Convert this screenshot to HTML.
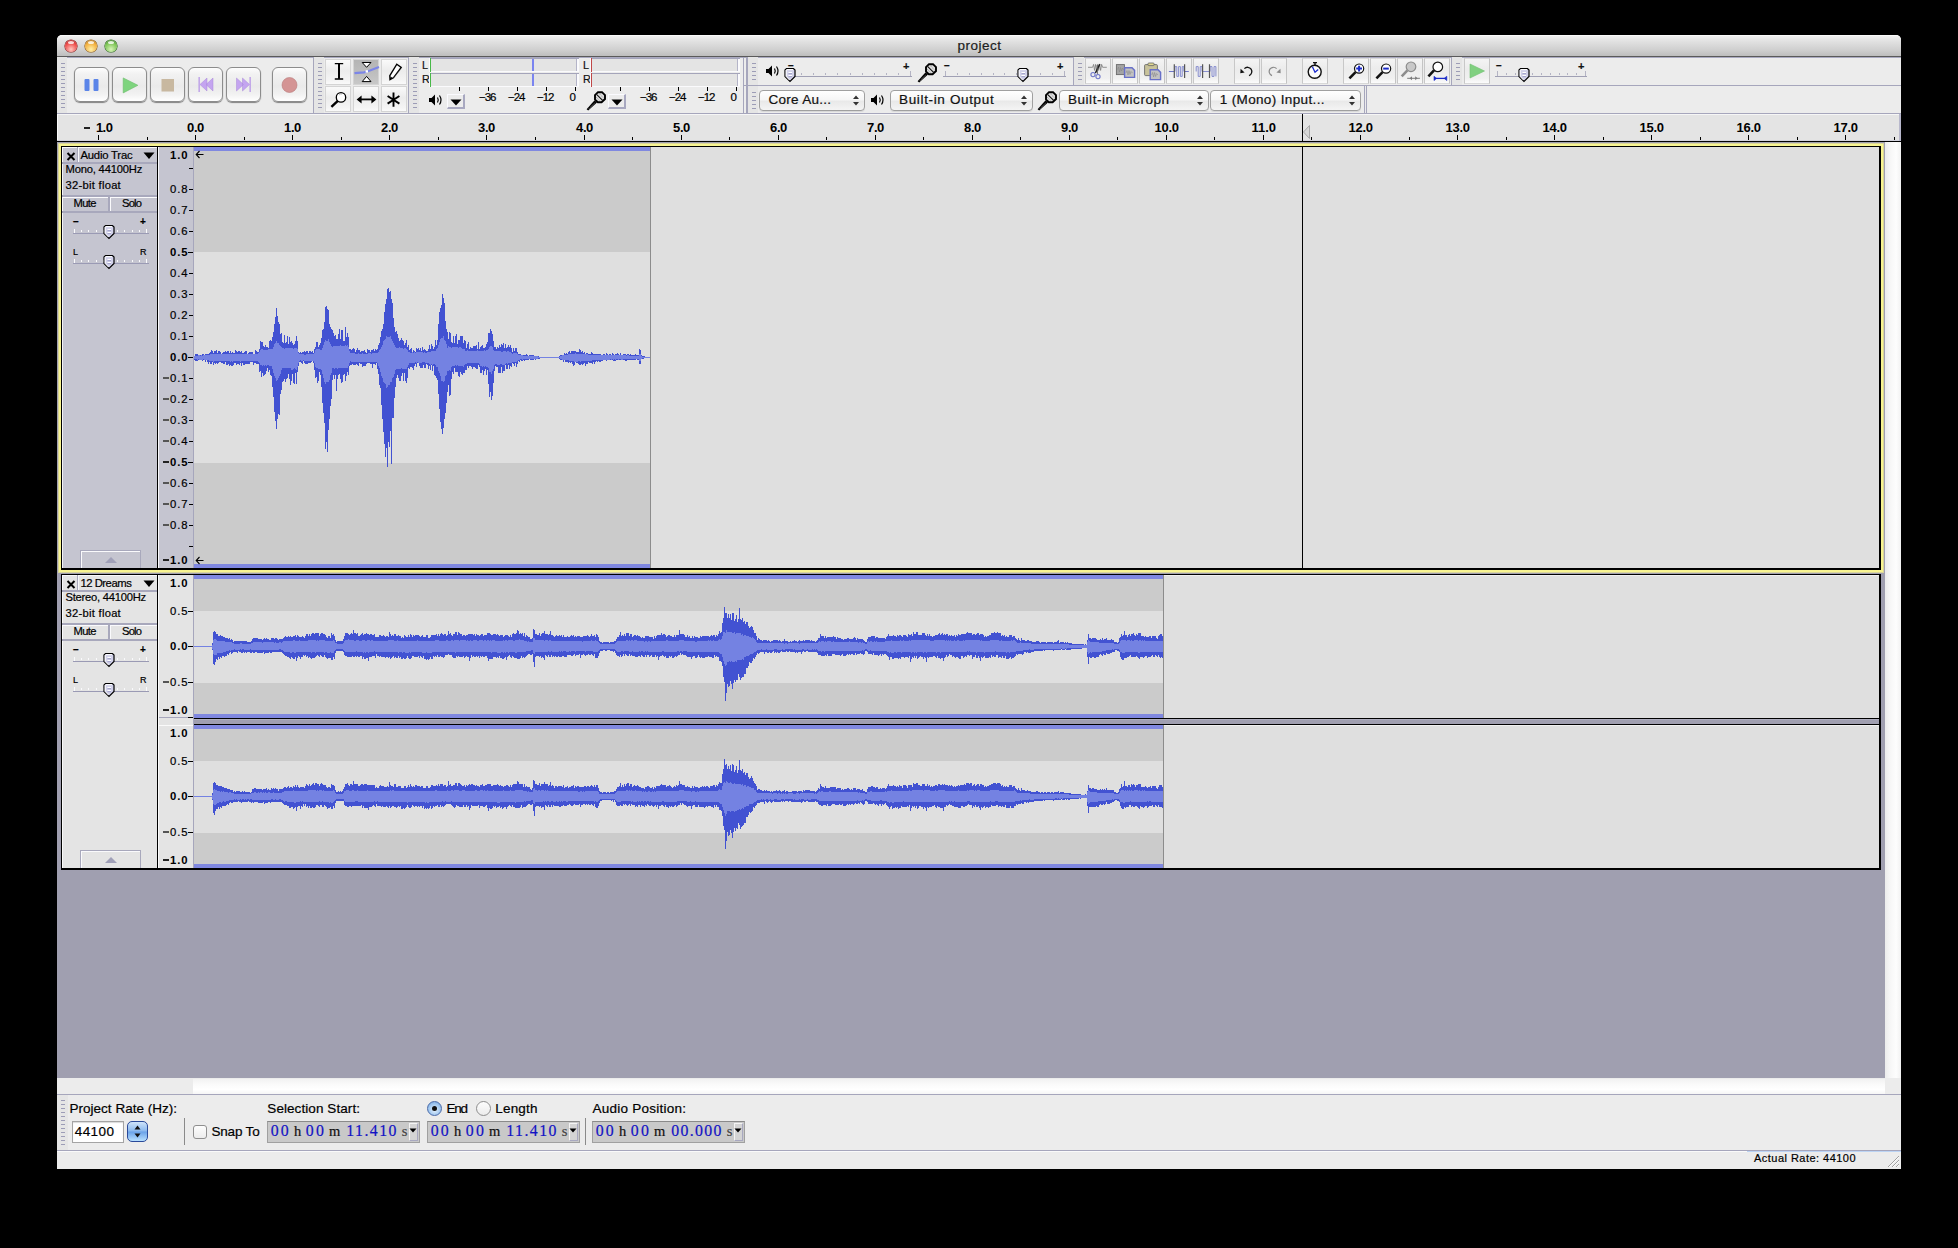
<!DOCTYPE html>
<html><head><meta charset="utf-8"><style>
*{margin:0;padding:0;box-sizing:border-box}
html,body{width:1958px;height:1248px;background:#000;overflow:hidden;font-family:"Liberation Sans",sans-serif;color:#000}
div{position:absolute}
.t{white-space:nowrap;line-height:1;-webkit-text-stroke:0.2px currentColor}
svg{position:absolute;overflow:visible}

</style></head><body>
<div style="left:57px;top:35px;width:1844px;height:1134px;background:#ececec;border-radius:5px 5px 0 0;overflow:hidden"></div>
<div style="left:57px;top:35px;width:1844px;height:21px;background:linear-gradient(#f0f0f0,#e2e2e2 25%,#cfcfcf 70%,#bdbdbd);border-radius:5px 5px 0 0;border-top:1px solid #fafafa"></div>
<div style="left:57px;top:56px;width:1844px;height:1px;background:#5a5a5a"></div>
<div style="left:57px;top:57px;width:1844px;height:1px;background:#a9a9c0"></div>
<div style="left:64.8px;top:40px;width:12px;height:12px;border-radius:50%;background:radial-gradient(circle at 50% 78%,#ffc8c0 0,#ee4a48 60%,#902020 100%);box-shadow:0 0 0 0.6px #902020"></div>
<div style="left:67.8px;top:41px;width:6px;height:3px;border-radius:50%;background:rgba(255,255,255,.8)"></div>
<div style="left:84.9px;top:40px;width:12px;height:12px;border-radius:50%;background:radial-gradient(circle at 50% 78%,#fff0a8 0,#f2ae3c 60%,#905a10 100%);box-shadow:0 0 0 0.6px #905a10"></div>
<div style="left:87.9px;top:41px;width:6px;height:3px;border-radius:50%;background:rgba(255,255,255,.8)"></div>
<div style="left:104.9px;top:40px;width:12px;height:12px;border-radius:50%;background:radial-gradient(circle at 50% 78%,#d8f4b8 0,#7cc454 60%,#2a6a1c 100%);box-shadow:0 0 0 0.6px #2a6a1c"></div>
<div style="left:107.9px;top:41px;width:6px;height:3px;border-radius:50%;background:rgba(255,255,255,.8)"></div>
<div class="t" style="left:957.60px;top:39.07px;font-size:13.5px;letter-spacing:0.497px;color:#202020;">project</div>
<div style="left:57px;top:58px;width:1844px;height:55px;background:#ececec"></div>
<div style="left:57px;top:113px;width:1844px;height:1px;background:#a6a6bc"></div>
<div style="left:744px;top:85px;width:1157px;height:1px;background:#a6a6bc"></div>
<div style="left:313px;top:57px;width:1px;height:56px;background:#a6a6bc"></div>
<div style="left:408px;top:57px;width:1px;height:56px;background:#a6a6bc"></div>
<div style="left:743px;top:57px;width:1px;height:56px;background:#a6a6bc"></div>
<div style="left:746px;top:57px;width:2px;height:56px;background:#a6a6bc"></div>
<div style="left:1073px;top:57px;width:1px;height:28px;background:#a6a6bc"></div>
<div style="left:1451px;top:57px;width:1px;height:28px;background:#a6a6bc"></div>
<div style="left:1364px;top:86px;width:1px;height:27px;background:#a6a6bc"></div>
<div style="left:1366px;top:86px;width:1px;height:27px;background:#a6a6bc"></div>
<div style="left:57px;top:57px;width:10px;height:56px;background:#e5e5e5"></div>
<div style="left:61px;top:63px;width:4px;height:1px;background:#9c9cb6"></div>
<div style="left:61px;top:67px;width:4px;height:1px;background:#9c9cb6"></div>
<div style="left:61px;top:71px;width:4px;height:1px;background:#9c9cb6"></div>
<div style="left:61px;top:75px;width:4px;height:1px;background:#9c9cb6"></div>
<div style="left:61px;top:79px;width:4px;height:1px;background:#9c9cb6"></div>
<div style="left:61px;top:83px;width:4px;height:1px;background:#9c9cb6"></div>
<div style="left:61px;top:87px;width:4px;height:1px;background:#9c9cb6"></div>
<div style="left:61px;top:91px;width:4px;height:1px;background:#9c9cb6"></div>
<div style="left:61px;top:95px;width:4px;height:1px;background:#9c9cb6"></div>
<div style="left:61px;top:99px;width:4px;height:1px;background:#9c9cb6"></div>
<div style="left:61px;top:103px;width:4px;height:1px;background:#9c9cb6"></div>
<div style="left:61px;top:107px;width:4px;height:1px;background:#9c9cb6"></div>
<div style="left:314px;top:57px;width:10px;height:56px;background:#e5e5e5"></div>
<div style="left:318px;top:63px;width:4px;height:1px;background:#9c9cb6"></div>
<div style="left:318px;top:67px;width:4px;height:1px;background:#9c9cb6"></div>
<div style="left:318px;top:71px;width:4px;height:1px;background:#9c9cb6"></div>
<div style="left:318px;top:75px;width:4px;height:1px;background:#9c9cb6"></div>
<div style="left:318px;top:79px;width:4px;height:1px;background:#9c9cb6"></div>
<div style="left:318px;top:83px;width:4px;height:1px;background:#9c9cb6"></div>
<div style="left:318px;top:87px;width:4px;height:1px;background:#9c9cb6"></div>
<div style="left:318px;top:91px;width:4px;height:1px;background:#9c9cb6"></div>
<div style="left:318px;top:95px;width:4px;height:1px;background:#9c9cb6"></div>
<div style="left:318px;top:99px;width:4px;height:1px;background:#9c9cb6"></div>
<div style="left:318px;top:103px;width:4px;height:1px;background:#9c9cb6"></div>
<div style="left:318px;top:107px;width:4px;height:1px;background:#9c9cb6"></div>
<div style="left:409px;top:57px;width:10px;height:56px;background:#e5e5e5"></div>
<div style="left:413px;top:63px;width:4px;height:1px;background:#9c9cb6"></div>
<div style="left:413px;top:67px;width:4px;height:1px;background:#9c9cb6"></div>
<div style="left:413px;top:71px;width:4px;height:1px;background:#9c9cb6"></div>
<div style="left:413px;top:75px;width:4px;height:1px;background:#9c9cb6"></div>
<div style="left:413px;top:79px;width:4px;height:1px;background:#9c9cb6"></div>
<div style="left:413px;top:83px;width:4px;height:1px;background:#9c9cb6"></div>
<div style="left:413px;top:87px;width:4px;height:1px;background:#9c9cb6"></div>
<div style="left:413px;top:91px;width:4px;height:1px;background:#9c9cb6"></div>
<div style="left:413px;top:95px;width:4px;height:1px;background:#9c9cb6"></div>
<div style="left:413px;top:99px;width:4px;height:1px;background:#9c9cb6"></div>
<div style="left:413px;top:103px;width:4px;height:1px;background:#9c9cb6"></div>
<div style="left:413px;top:107px;width:4px;height:1px;background:#9c9cb6"></div>
<div style="left:748px;top:57px;width:10px;height:28px;background:#e5e5e5"></div>
<div style="left:752px;top:63px;width:4px;height:1px;background:#9c9cb6"></div>
<div style="left:752px;top:67px;width:4px;height:1px;background:#9c9cb6"></div>
<div style="left:752px;top:71px;width:4px;height:1px;background:#9c9cb6"></div>
<div style="left:752px;top:75px;width:4px;height:1px;background:#9c9cb6"></div>
<div style="left:752px;top:79px;width:4px;height:1px;background:#9c9cb6"></div>
<div style="left:748px;top:86px;width:10px;height:27px;background:#e5e5e5"></div>
<div style="left:752px;top:92px;width:4px;height:1px;background:#9c9cb6"></div>
<div style="left:752px;top:96px;width:4px;height:1px;background:#9c9cb6"></div>
<div style="left:752px;top:100px;width:4px;height:1px;background:#9c9cb6"></div>
<div style="left:752px;top:104px;width:4px;height:1px;background:#9c9cb6"></div>
<div style="left:752px;top:108px;width:4px;height:1px;background:#9c9cb6"></div>
<div style="left:1074px;top:57px;width:10px;height:28px;background:#e5e5e5"></div>
<div style="left:1078px;top:63px;width:4px;height:1px;background:#9c9cb6"></div>
<div style="left:1078px;top:67px;width:4px;height:1px;background:#9c9cb6"></div>
<div style="left:1078px;top:71px;width:4px;height:1px;background:#9c9cb6"></div>
<div style="left:1078px;top:75px;width:4px;height:1px;background:#9c9cb6"></div>
<div style="left:1078px;top:79px;width:4px;height:1px;background:#9c9cb6"></div>
<div style="left:1452px;top:57px;width:10px;height:28px;background:#e5e5e5"></div>
<div style="left:1456px;top:63px;width:4px;height:1px;background:#9c9cb6"></div>
<div style="left:1456px;top:67px;width:4px;height:1px;background:#9c9cb6"></div>
<div style="left:1456px;top:71px;width:4px;height:1px;background:#9c9cb6"></div>
<div style="left:1456px;top:75px;width:4px;height:1px;background:#9c9cb6"></div>
<div style="left:1456px;top:79px;width:4px;height:1px;background:#9c9cb6"></div>
<div style="left:74px;top:67px;width:35px;height:35px;border:1px solid #8c8c8c;border-radius:6px;background:linear-gradient(#fdfdfd,#f2f2f2 18%,#eaeaea 55%,#f2f2f2 80%,#ffffff);box-shadow:0 1px 1px rgba(0,0,0,.45)"><svg width="35" height="35" style="left:-1px;top:-1px"><rect x="10.5" y="12" width="5" height="12" rx="1" fill="#5a84e8"/><rect x="19.5" y="12" width="5" height="12" rx="1" fill="#5a84e8"/></svg></div>
<div style="left:112px;top:67px;width:35px;height:35px;border:1px solid #8c8c8c;border-radius:6px;background:linear-gradient(#fdfdfd,#f2f2f2 18%,#eaeaea 55%,#f2f2f2 80%,#ffffff);box-shadow:0 1px 1px rgba(0,0,0,.45)"><svg width="35" height="35" style="left:-2px;top:-2px"><path d="M12.2 11.9 L26.9 19.3 L12.2 26.9 Z" fill="#7ed47e" stroke="#6cbc6c" stroke-width="0.6"/></svg></div>
<div style="left:150px;top:67px;width:35px;height:35px;border:1px solid #8c8c8c;border-radius:6px;background:linear-gradient(#fdfdfd,#f2f2f2 18%,#eaeaea 55%,#f2f2f2 80%,#ffffff);box-shadow:0 1px 1px rgba(0,0,0,.45)"><svg width="35" height="35" style="left:-1px;top:-1px"><rect x="11.5" y="12" width="12.5" height="12.5" fill="#c8b8a0"/></svg></div>
<div style="left:188px;top:67px;width:35px;height:35px;border:1px solid #8c8c8c;border-radius:6px;background:linear-gradient(#fdfdfd,#f2f2f2 18%,#eaeaea 55%,#f2f2f2 80%,#ffffff);box-shadow:0 1px 1px rgba(0,0,0,.45)"><svg width="35" height="35" style="left:-1px;top:-1px"><rect x="10.5" y="10" width="1.3" height="15" fill="#b898e8"/><path d="M12 17.5 L19 11 L19 24 Z M18 17.5 L25 11 L25 24 Z" fill="#c4a4f0" stroke="#a888d8" stroke-width="0.5"/></svg></div>
<div style="left:226px;top:67px;width:35px;height:35px;border:1px solid #8c8c8c;border-radius:6px;background:linear-gradient(#fdfdfd,#f2f2f2 18%,#eaeaea 55%,#f2f2f2 80%,#ffffff);box-shadow:0 1px 1px rgba(0,0,0,.45)"><svg width="35" height="35" style="left:-1px;top:-1px"><path d="M10.5 11 L17.5 17.5 L10.5 24 Z M16.5 11 L23.5 17.5 L16.5 24 Z" fill="#c4a4f0" stroke="#a888d8" stroke-width="0.5"/><rect x="23.5" y="10" width="1.3" height="15" fill="#b898e8"/></svg></div>
<div style="left:272px;top:67px;width:35px;height:35px;border:1px solid #8c8c8c;border-radius:6px;background:linear-gradient(#fdfdfd,#f2f2f2 18%,#eaeaea 55%,#f2f2f2 80%,#ffffff);box-shadow:0 1px 1px rgba(0,0,0,.45)"><svg width="35" height="35" style="left:-1px;top:-1px"><circle cx="17.5" cy="18" r="7.5" fill="#d49494" stroke="#b87878" stroke-width="0.6"/></svg></div>
<div style="left:325px;top:59px;width:26px;height:26px;background:linear-gradient(#fafafa,#ececec 45%,#f4f4f4 85%,#fafafa);border:1px solid #d4d4d4"><svg width="26" height="26" style="left:-2px;top:-2px"><path d="M10.8 5.6 H19.2 M15 5.6 V21 M10.8 21 H19.2" stroke="#000" stroke-width="1.3" fill="none"/><path d="M15 6 V20.5" stroke="#000" stroke-width="2"/></svg></div>
<div style="left:353px;top:59px;width:26px;height:26px;background:linear-gradient(#b4b4b4,#bdbdbd 50%,#c8c8c8);border:1px solid #d4d4d4"><svg width="26" height="26" style="left:-2px;top:-2px"><path d="M10.2 4.5 H19 L14.6 9.3 Z M10.2 23.6 H19 L14.6 18.4 Z" fill="#fff" stroke="#000" stroke-width="1"/><path d="M2.5 15.2 L12 14.3 L18 12.5 L27 9" stroke="#7c86e8" stroke-width="2.2" fill="none"/><rect x="13.6" y="12.2" width="2.4" height="2.4" fill="#fff"/></svg></div>
<div style="left:381px;top:59px;width:26px;height:26px;background:linear-gradient(#fafafa,#ececec 45%,#f4f4f4 85%,#fafafa);border:1px solid #d4d4d4"><svg width="26" height="26" style="left:-2px;top:-2px"><path d="M16.8 6.2 L21.2 9.4 L13.4 19.8 L10 21.6 L9.8 17.6 Z" fill="#fff" stroke="#000" stroke-width="1.4"/><path d="M10 21.6 L10.6 18.6 L12.6 20 Z" fill="#000"/><path d="M14 19.6 L21.4 10.6" stroke="#777" stroke-width="0.7" stroke-dasharray="0.8 0.8"/></svg></div>
<div style="left:325px;top:86px;width:26px;height:26px;background:linear-gradient(#fafafa,#ececec 45%,#f4f4f4 85%,#fafafa);border:1px solid #d4d4d4"><svg width="26" height="26" style="left:-2px;top:-2px"><circle cx="17" cy="12.4" r="4.7" fill="#fff" stroke="#000" stroke-width="1.3"/><path d="M13.8 15.8 L7.4 21.8" stroke="#000" stroke-width="2.4"/><path d="M15 10 A3 3 0 0 1 18 9" stroke="#999" stroke-width="0.6" fill="none"/></svg></div>
<div style="left:353px;top:86px;width:26px;height:26px;background:linear-gradient(#fafafa,#ececec 45%,#f4f4f4 85%,#fafafa);border:1px solid #d4d4d4"><svg width="26" height="26" style="left:-2px;top:-2px"><path d="M7 14.4 H22" stroke="#000" stroke-width="1.8"/><path d="M4.6 14.4 L9.6 10.4 V18.4 Z M24.4 14.4 L19.4 10.4 V18.4 Z" fill="#000"/></svg></div>
<div style="left:381px;top:86px;width:26px;height:26px;background:linear-gradient(#fafafa,#ececec 45%,#f4f4f4 85%,#fafafa);border:1px solid #d4d4d4"><svg width="26" height="26" style="left:-2px;top:-2px"><path d="M13.5 7.5 V21.8 M7.6 11 L19.4 18.6 M19.4 11 L7.6 18.6" stroke="#000" stroke-width="1.9"/></svg></div>
<div class="t" style="left:422.00px;top:59.76px;font-size:10.8px;color:#111;">L</div>
<div class="t" style="left:422.00px;top:73.76px;font-size:10.8px;color:#111;">R</div>
<div style="left:429px;top:58px;width:150px;height:14px;background:#fafafc"></div>
<div style="left:431px;top:58px;width:148px;height:1px;background:#a4a4ba"></div>
<div style="left:431px;top:59px;width:145px;height:12px;background:#e4e4e4"></div>
<div style="left:576px;top:59px;width:1px;height:12px;background:#b4b4c8"></div>
<div style="left:430px;top:58px;width:1px;height:14px;background:#48b848"></div>
<div style="left:429px;top:73px;width:150px;height:14px;background:#fafafc"></div>
<div style="left:431px;top:73px;width:148px;height:1px;background:#a4a4ba"></div>
<div style="left:431px;top:74px;width:145px;height:12px;background:#e4e4e4"></div>
<div style="left:576px;top:74px;width:1px;height:12px;background:#b4b4c8"></div>
<div style="left:430px;top:73px;width:1px;height:14px;background:#48b848"></div>
<div class="t" style="left:583.00px;top:59.76px;font-size:10.8px;color:#111;">L</div>
<div class="t" style="left:583.00px;top:73.76px;font-size:10.8px;color:#111;">R</div>
<div style="left:590px;top:58px;width:150px;height:14px;background:#fafafc"></div>
<div style="left:592px;top:58px;width:148px;height:1px;background:#a4a4ba"></div>
<div style="left:592px;top:59px;width:145px;height:12px;background:#e4e4e4"></div>
<div style="left:737px;top:59px;width:1px;height:12px;background:#b4b4c8"></div>
<div style="left:591px;top:58px;width:1px;height:14px;background:#c04848"></div>
<div style="left:590px;top:73px;width:150px;height:14px;background:#fafafc"></div>
<div style="left:592px;top:73px;width:148px;height:1px;background:#a4a4ba"></div>
<div style="left:592px;top:74px;width:145px;height:12px;background:#e4e4e4"></div>
<div style="left:737px;top:74px;width:1px;height:12px;background:#b4b4c8"></div>
<div style="left:591px;top:73px;width:1px;height:14px;background:#c04848"></div>
<div style="left:532px;top:59px;width:2px;height:12px;background:#7a84f0"></div>
<div style="left:532px;top:74px;width:2px;height:12px;background:#7a84f0"></div>
<div style="left:459px;top:87px;width:1px;height:4px;background:#000"></div>
<div style="left:488px;top:87px;width:1px;height:4px;background:#000"></div>
<div style="left:517px;top:87px;width:1px;height:4px;background:#000"></div>
<div style="left:546px;top:87px;width:1px;height:4px;background:#000"></div>
<div style="left:575px;top:87px;width:1px;height:4px;background:#000"></div>
<div style="left:620px;top:87px;width:1px;height:4px;background:#000"></div>
<div style="left:649px;top:87px;width:1px;height:4px;background:#000"></div>
<div style="left:678px;top:87px;width:1px;height:4px;background:#000"></div>
<div style="left:707px;top:87px;width:1px;height:4px;background:#000"></div>
<div style="left:736px;top:87px;width:1px;height:4px;background:#000"></div>
<div class="t" style="left:479.00px;top:91.77px;font-size:11.5px;letter-spacing:-1.003px;">&minus;36</div>
<div class="t" style="left:508.00px;top:91.77px;font-size:11.5px;letter-spacing:-1.003px;">&minus;24</div>
<div class="t" style="left:537.00px;top:91.77px;font-size:11.5px;letter-spacing:-1.003px;">&minus;12</div>
<div class="t" style="left:569.50px;top:91.77px;font-size:11.5px;">0</div>
<div class="t" style="left:640.00px;top:91.77px;font-size:11.5px;letter-spacing:-1.003px;">&minus;36</div>
<div class="t" style="left:669.00px;top:91.77px;font-size:11.5px;letter-spacing:-1.003px;">&minus;24</div>
<div class="t" style="left:698.00px;top:91.77px;font-size:11.5px;letter-spacing:-1.003px;">&minus;12</div>
<div class="t" style="left:730.50px;top:91.77px;font-size:11.5px;">0</div>
<div style="left:428px;top:93px;width:16px;height:14px"><svg width="16" height="14"><path d="M1 5 H3.5 L7 1.5 V12.5 L3.5 9 H1 Z" fill="#000"/><path d="M9.5 4.5 Q11 7 9.5 9.5 M11.5 2.5 Q14.5 7 11.5 11.5" stroke="#000" stroke-width="1.2" fill="none"/></svg></div>
<div style="left:447px;top:94px;width:18px;height:15px;border-left:1px solid #fbfbff;border-top:1px solid #fbfbff;border-right:2px solid #a8a8c0;border-bottom:2px solid #a8a8c0;background:#ececec"><svg width="14" height="8" style="left:2px;top:4px"><path d="M0.5 0.5 H11.5 L6 6.5 Z" fill="#000"/></svg></div>
<div style="left:585.5px;top:91px;width:20px;height:20px"><svg width="20" height="20"><path d="M8.6 9.2 L11 11.4 L2.2 19.6 L0.6 18.2 Z" fill="#000"/><path d="M3 17.6 L9 11.8" stroke="#fff" stroke-width="0.6" stroke-dasharray="0.8 0.8"/><path d="M12 1.2 H16 L19 4.2 V8 L15.6 11.2 H11.8 L9 8.4 V4.2 Z" fill="#dedede" stroke="#000" stroke-width="1.9"/><path d="M10.8 3.6 L16.6 9.4" stroke="#111" stroke-width="1.1"/><path d="M13.6 3 L17.6 7 M10.2 6.2 L13.4 9.4" stroke="#8a8a8a" stroke-width="0.8" stroke-dasharray="1 0.8"/></svg></div>
<div style="left:608px;top:94px;width:18px;height:15px;border-left:1px solid #fbfbff;border-top:1px solid #fbfbff;border-right:2px solid #a8a8c0;border-bottom:2px solid #a8a8c0;background:#ececec"><svg width="14" height="8" style="left:2px;top:4px"><path d="M0.5 0.5 H11.5 L6 6.5 Z" fill="#000"/></svg></div>
<div style="left:765px;top:64px;width:16px;height:14px"><svg width="16" height="14"><path d="M1 5 H3.5 L7 1.5 V12.5 L3.5 9 H1 Z" fill="#000"/><path d="M9.5 4.5 Q11 7 9.5 9.5 M11.5 2.5 Q14.5 7 11.5 11.5" stroke="#000" stroke-width="1.2" fill="none"/></svg></div>
<div style="left:917px;top:62.5px;width:20px;height:20px"><svg width="20" height="20"><path d="M8.6 9.2 L11 11.4 L2.2 19.6 L0.6 18.2 Z" fill="#000"/><path d="M3 17.6 L9 11.8" stroke="#fff" stroke-width="0.6" stroke-dasharray="0.8 0.8"/><path d="M12 1.2 H16 L19 4.2 V8 L15.6 11.2 H11.8 L9 8.4 V4.2 Z" fill="#dedede" stroke="#000" stroke-width="1.9"/><path d="M10.8 3.6 L16.6 9.4" stroke="#111" stroke-width="1.1"/><path d="M13.6 3 L17.6 7 M10.2 6.2 L13.4 9.4" stroke="#8a8a8a" stroke-width="0.8" stroke-dasharray="1 0.8"/></svg></div>
<div style="left:787px;top:76px;width:125px;height:1px;background:#a0a0b4"></div>
<div style="left:789px;top:71px;width:1px;height:5px;background:#b4b4c4"></div>
<div style="left:801px;top:73px;width:1px;height:2px;background:#b4b4c4"></div>
<div style="left:813px;top:73px;width:1px;height:2px;background:#b4b4c4"></div>
<div style="left:825px;top:73px;width:1px;height:2px;background:#b4b4c4"></div>
<div style="left:837px;top:73px;width:1px;height:2px;background:#b4b4c4"></div>
<div style="left:850px;top:73px;width:1px;height:2px;background:#b4b4c4"></div>
<div style="left:862px;top:73px;width:1px;height:2px;background:#b4b4c4"></div>
<div style="left:874px;top:73px;width:1px;height:2px;background:#b4b4c4"></div>
<div style="left:886px;top:73px;width:1px;height:2px;background:#b4b4c4"></div>
<div style="left:898px;top:73px;width:1px;height:2px;background:#b4b4c4"></div>
<div style="left:910px;top:71px;width:1px;height:5px;background:#b4b4c4"></div>
<div class="t" style="left:788px;top:60.5px;font-size:10px;font-weight:bold;color:#111">&ndash;</div>
<div class="t" style="left:903px;top:60.5px;font-size:11px;font-weight:bold;color:#111">+</div>
<svg width="14" height="17" style="left:783px;top:67px"><path d="M3.5 1.5 H10.5 L12 3 V9.5 L7 14.5 L2 9.5 V3 Z" fill="#d2d2ea" stroke="#000" stroke-width="1.2"/><path d="M3.2 3 V9.5 L6.5 13 M3.5 2.6 H10" stroke="#fff" stroke-width="1" fill="none"/><path d="M5.5 5.5 H9 M5.5 8.5 H9" stroke="#fff" stroke-width="1"/><path d="M5.5 6.7 H9 M5.5 9.7 H9" stroke="#9898c4" stroke-width="0.9"/></svg>
<div style="left:943px;top:76px;width:123px;height:1px;background:#a0a0b4"></div>
<div style="left:945px;top:71px;width:1px;height:5px;background:#b4b4c4"></div>
<div style="left:957px;top:73px;width:1px;height:2px;background:#b4b4c4"></div>
<div style="left:969px;top:73px;width:1px;height:2px;background:#b4b4c4"></div>
<div style="left:981px;top:73px;width:1px;height:2px;background:#b4b4c4"></div>
<div style="left:993px;top:73px;width:1px;height:2px;background:#b4b4c4"></div>
<div style="left:1004px;top:73px;width:1px;height:2px;background:#b4b4c4"></div>
<div style="left:1016px;top:73px;width:1px;height:2px;background:#b4b4c4"></div>
<div style="left:1028px;top:73px;width:1px;height:2px;background:#b4b4c4"></div>
<div style="left:1040px;top:73px;width:1px;height:2px;background:#b4b4c4"></div>
<div style="left:1052px;top:73px;width:1px;height:2px;background:#b4b4c4"></div>
<div style="left:1064px;top:71px;width:1px;height:5px;background:#b4b4c4"></div>
<div class="t" style="left:944px;top:60.5px;font-size:10px;font-weight:bold;color:#111">&ndash;</div>
<div class="t" style="left:1057px;top:60.5px;font-size:11px;font-weight:bold;color:#111">+</div>
<svg width="14" height="17" style="left:1016px;top:67px"><path d="M3.5 1.5 H10.5 L12 3 V9.5 L7 14.5 L2 9.5 V3 Z" fill="#d2d2ea" stroke="#000" stroke-width="1.2"/><path d="M3.2 3 V9.5 L6.5 13 M3.5 2.6 H10" stroke="#fff" stroke-width="1" fill="none"/><path d="M5.5 5.5 H9 M5.5 8.5 H9" stroke="#fff" stroke-width="1"/><path d="M5.5 6.7 H9 M5.5 9.7 H9" stroke="#9898c4" stroke-width="0.9"/></svg>
<div style="left:1085px;top:58px;width:26px;height:26px;background:linear-gradient(#f4f4f4,#ececec 40%,#f0f0f0 80%,#fcfcfc);border:1px solid #d8d8d8;border-left-color:#c8c8c8;border-right-color:#c4c4c4"><svg width="26" height="26" style="left:-1px;top:-1px"><path d="M3 9.3 H7.6 L8.6 6.4 L9.6 12.4 L10.6 6.4 L11.6 12.4 L12.6 6.4 L13.6 12.4 L14.6 6.4 L15.6 12.4 L16.6 6.4 L17.6 9.3 H21.8" stroke="#7a7a7a" stroke-width="0.8" fill="none"/><path d="M14.8 6.2 L10.4 15" stroke="#222" stroke-width="1.6"/><path d="M12.2 7 L12.6 16.2" stroke="#555" stroke-width="0.8"/><circle cx="8" cy="16.6" r="2.1" fill="none" stroke="#6e76c8" stroke-width="1.1"/><circle cx="13" cy="18.6" r="2.1" fill="none" stroke="#6e76c8" stroke-width="1.1"/></svg></div>
<div style="left:1112px;top:58px;width:26px;height:26px;background:linear-gradient(#f4f4f4,#ececec 40%,#f0f0f0 80%,#fcfcfc);border:1px solid #d8d8d8;border-left-color:#c8c8c8;border-right-color:#c4c4c4"><svg width="26" height="26" style="left:-1px;top:-1px"><rect x="4.4" y="6.6" width="8" height="10" fill="#a4a4a4" stroke="#6a6a6a" stroke-width="0.9"/><path d="M5.5 11.5 L6.5 9 L7.5 14 L8.5 9.5 L9.5 13 L10.5 10 L11.5 12" stroke="#888" stroke-width="0.6" fill="none"/><path d="M12.6 9.8 H20 L22.6 12.4 V19.4 H12.6 Z" fill="#c2c2c2" stroke="#6870c8" stroke-width="1.4"/><path d="M14 15 L15 12.5 L16 17 L17 12.5 L18 16.5 L19 13.5 L20.5 15" stroke="#8a8a8a" stroke-width="0.6" fill="none"/></svg></div>
<div style="left:1139px;top:58px;width:26px;height:26px;background:linear-gradient(#f4f4f4,#ececec 40%,#f0f0f0 80%,#fcfcfc);border:1px solid #d8d8d8;border-left-color:#c8c8c8;border-right-color:#c4c4c4"><svg width="26" height="26" style="left:-1px;top:-1px"><rect x="5.6" y="6.6" width="12.8" height="11" rx="1" fill="#c8c29a" stroke="#6a6a6a" stroke-width="0.9"/><rect x="9" y="5" width="6" height="2.6" rx="0.8" fill="#e0d890" stroke="#666" stroke-width="0.8"/><path d="M11.2 11.8 H19 L21.6 14.4 V21.6 H11.2 Z" fill="#c2c2c2" stroke="#6870c8" stroke-width="1.4"/><path d="M12.6 17 L13.6 14.5 L14.6 19 L15.6 14.5 L16.6 18.5 L17.6 15.5 L19 17" stroke="#8a8a8a" stroke-width="0.6" fill="none"/></svg></div>
<div style="left:1166px;top:58px;width:26px;height:26px;background:linear-gradient(#f4f4f4,#ececec 40%,#f0f0f0 80%,#fcfcfc);border:1px solid #d8d8d8;border-left-color:#c8c8c8;border-right-color:#c4c4c4"><svg width="26" height="26" style="left:-1px;top:-1px"><path d="M2.9 13.5 H8.3 M18.6 13.5 H22.8" stroke="#6e76c8" stroke-width="1.1"/><path d="M9 13.5 V8.6 H10.8 V18.4 H12.6 V8.6 H14.4 V18.4 H16.2 V8.6 H17.8 V13.5" stroke="#6e76c8" stroke-width="0.8" fill="none"/><path d="M8.3 6.2 V20 M18.6 6.2 V20" stroke="#555" stroke-width="1.2"/></svg></div>
<div style="left:1193px;top:58px;width:26px;height:26px;background:linear-gradient(#f4f4f4,#ececec 40%,#f0f0f0 80%,#fcfcfc);border:1px solid #d8d8d8;border-left-color:#c8c8c8;border-right-color:#c4c4c4"><svg width="26" height="26" style="left:-1px;top:-1px"><path d="M3.2 13.5 V8.6 H5.2 V18.4 H7.2 V8.6 H9 V13.5 M9.6 13.5 H16.5 M17.1 13.5 V8.6 H19 V18.4 H21 V8.6 H22.9 V18.4" stroke="#6e76c8" stroke-width="0.8" fill="none"/><path d="M9.6 6.2 V20 M16.5 6.2 V20" stroke="#555" stroke-width="1.2"/></svg></div>
<div style="left:1234px;top:58px;width:26px;height:26px;background:linear-gradient(#f4f4f4,#ececec 40%,#f0f0f0 80%,#fcfcfc);border:1px solid #d8d8d8;border-left-color:#c8c8c8;border-right-color:#c4c4c4"><svg width="26" height="26" style="left:-1px;top:-1px"><path d="M15 17.6 A4.3 4.3 0 1 0 10.4 10.6" stroke="#111" stroke-width="1.3" fill="none"/><path d="M6.3 15.2 L6.6 10.8 L10.6 14.4 Z" fill="#111"/></svg></div>
<div style="left:1261px;top:58px;width:26px;height:26px;background:linear-gradient(#f4f4f4,#ececec 40%,#f0f0f0 80%,#fcfcfc);border:1px solid #d8d8d8;border-left-color:#c8c8c8;border-right-color:#c4c4c4"><svg width="26" height="26" style="left:-1px;top:-1px"><path d="M11 17.6 A4.3 4.3 0 1 1 15.6 10.6" stroke="#8a8a8a" stroke-width="1.2" fill="none"/><path d="M19.7 15.2 L19.4 10.8 L15.4 14.4 Z" fill="#8a8a8a"/></svg></div>
<div style="left:1302px;top:58px;width:26px;height:26px;background:linear-gradient(#f4f4f4,#ececec 40%,#f0f0f0 80%,#fcfcfc);border:1px solid #d8d8d8;border-left-color:#c8c8c8;border-right-color:#c4c4c4"><svg width="26" height="26" style="left:-1px;top:-1px"><circle cx="13.4" cy="14.6" r="6.6" fill="#c8c8c8" opacity="0.5"/><circle cx="12.7" cy="13.8" r="6.5" fill="#fbfbfb" stroke="#111" stroke-width="1.4"/><path d="M11 4.6 H15 M13 4.6 V7.2" stroke="#111" stroke-width="1.4"/><path d="M10.4 8.8 L13 14.2 L16.2 11.6" stroke="#1a2ad0" stroke-width="1.3" fill="none"/></svg></div>
<div style="left:1343px;top:58px;width:26px;height:26px;background:linear-gradient(#f4f4f4,#ececec 40%,#f0f0f0 80%,#fcfcfc);border:1px solid #d8d8d8;border-left-color:#c8c8c8;border-right-color:#c4c4c4"><svg width="26" height="26" style="left:-1px;top:-1px"><path d="M12.6 14.2 L6.4 20.4" stroke="#111" stroke-width="2.6"/><circle cx="16.1" cy="10.6" r="4.6" fill="#fff" stroke="#111" stroke-width="1.2"/><path d="M13.2 10.6 H19 M16.1 7.8 V13.5" stroke="#1a2ac8" stroke-width="2"/></svg></div>
<div style="left:1370px;top:58px;width:26px;height:26px;background:linear-gradient(#f4f4f4,#ececec 40%,#f0f0f0 80%,#fcfcfc);border:1px solid #d8d8d8;border-left-color:#c8c8c8;border-right-color:#c4c4c4"><svg width="26" height="26" style="left:-1px;top:-1px"><path d="M12.6 14.2 L6.4 20.4" stroke="#111" stroke-width="2.6"/><circle cx="16.1" cy="10.6" r="4.6" fill="#fff" stroke="#111" stroke-width="1.2"/><path d="M13.2 10.6 H18.8" stroke="#1a2ac8" stroke-width="2"/></svg></div>
<div style="left:1397px;top:58px;width:26px;height:26px;background:linear-gradient(#f4f4f4,#ececec 40%,#f0f0f0 80%,#fcfcfc);border:1px solid #d8d8d8;border-left-color:#c8c8c8;border-right-color:#c4c4c4"><svg width="26" height="26" style="left:-1px;top:-1px"><path d="M10.4 12.4 L4.7 18.4" stroke="#8c8c8c" stroke-width="2.6"/><circle cx="14" cy="8.8" r="4.8" fill="#c8c8c8" stroke="#8c8c8c" stroke-width="1.2"/><path d="M10.2 20.3 H22.9" stroke="#7a7a7a" stroke-width="1"/><path d="M12.6 20.3 L15 18.3 V22.3 Z M20.6 20.3 L18.2 18.3 V22.3 Z" fill="#7a7a7a"/></svg></div>
<div style="left:1424px;top:58px;width:26px;height:26px;background:linear-gradient(#f4f4f4,#ececec 40%,#f0f0f0 80%,#fcfcfc);border:1px solid #d8d8d8;border-left-color:#c8c8c8;border-right-color:#c4c4c4"><svg width="26" height="26" style="left:-1px;top:-1px"><path d="M10 12.4 L4.4 18.3" stroke="#111" stroke-width="2.6"/><circle cx="13.8" cy="8.9" r="4.8" fill="#fff" stroke="#111" stroke-width="1.2"/><path d="M10.6 20.4 H22.2" stroke="#1a2ac8" stroke-width="1.3"/><path d="M10 18.2 V22.6 L12.6 20.4 Z M22.8 18.2 V22.6 L20.2 20.4 Z" fill="#1a2ac8" stroke="#1a2ac8" stroke-width="0.6"/></svg></div>
<div style="left:1464px;top:58px;width:26px;height:26px;background:linear-gradient(#f4f4f4,#ececec 40%,#f0f0f0 80%,#fcfcfc);border:1px solid #d8d8d8;border-left-color:#c8c8c8;border-right-color:#c4c4c4"><svg width="26" height="26" style="left:-1px;top:-1px"><path d="M6 6 L20.5 13 L6 20 Z" fill="#80d080" stroke="#70c070" stroke-width="0.6"/></svg></div>
<div style="left:1495px;top:76px;width:92px;height:1px;background:#a0a0b4"></div>
<div style="left:1497px;top:71px;width:1px;height:5px;background:#b4b4c4"></div>
<div style="left:1506px;top:73px;width:1px;height:2px;background:#b4b4c4"></div>
<div style="left:1515px;top:73px;width:1px;height:2px;background:#b4b4c4"></div>
<div style="left:1523px;top:73px;width:1px;height:2px;background:#b4b4c4"></div>
<div style="left:1532px;top:73px;width:1px;height:2px;background:#b4b4c4"></div>
<div style="left:1541px;top:73px;width:1px;height:2px;background:#b4b4c4"></div>
<div style="left:1550px;top:73px;width:1px;height:2px;background:#b4b4c4"></div>
<div style="left:1559px;top:73px;width:1px;height:2px;background:#b4b4c4"></div>
<div style="left:1567px;top:73px;width:1px;height:2px;background:#b4b4c4"></div>
<div style="left:1576px;top:73px;width:1px;height:2px;background:#b4b4c4"></div>
<div style="left:1585px;top:71px;width:1px;height:5px;background:#b4b4c4"></div>
<div class="t" style="left:1496px;top:60.5px;font-size:10px;font-weight:bold;color:#111">&ndash;</div>
<div class="t" style="left:1578px;top:60.5px;font-size:11px;font-weight:bold;color:#111">+</div>
<svg width="14" height="17" style="left:1517px;top:67px"><path d="M3.5 1.5 H10.5 L12 3 V9.5 L7 14.5 L2 9.5 V3 Z" fill="#d2d2ea" stroke="#000" stroke-width="1.2"/><path d="M3.2 3 V9.5 L6.5 13 M3.5 2.6 H10" stroke="#fff" stroke-width="1" fill="none"/><path d="M5.5 5.5 H9 M5.5 8.5 H9" stroke="#fff" stroke-width="1"/><path d="M5.5 6.7 H9 M5.5 9.7 H9" stroke="#9898c4" stroke-width="0.9"/></svg>
<div style="left:759px;top:90px;width:106px;height:21px;border:1px solid #a0a0a0;border-radius:4px;background:linear-gradient(#ffffff,#f6f6f6 45%,#e9e9e9 55%,#f4f4f4);box-shadow:0 1px 0 rgba(0,0,0,.08)"><svg width="8" height="13" style="left:92px;top:3px"><path d="M1 5 L4 1.5 L7 5 Z M1 8 L4 11.5 L7 8 Z" fill="#333"/></svg></div>
<div style="left:870px;top:93px;width:16px;height:14px"><svg width="16" height="14"><path d="M1 5 H3.5 L7 1.5 V12.5 L3.5 9 H1 Z" fill="#000"/><path d="M9.5 4.5 Q11 7 9.5 9.5 M11.5 2.5 Q14.5 7 11.5 11.5" stroke="#000" stroke-width="1.2" fill="none"/></svg></div>
<div style="left:890px;top:90px;width:143px;height:21px;border:1px solid #a0a0a0;border-radius:4px;background:linear-gradient(#ffffff,#f6f6f6 45%,#e9e9e9 55%,#f4f4f4);box-shadow:0 1px 0 rgba(0,0,0,.08)"><svg width="8" height="13" style="left:129px;top:3px"><path d="M1 5 L4 1.5 L7 5 Z M1 8 L4 11.5 L7 8 Z" fill="#333"/></svg></div>
<div style="left:1037px;top:90.5px;width:20px;height:20px"><svg width="20" height="20"><path d="M8.6 9.2 L11 11.4 L2.2 19.6 L0.6 18.2 Z" fill="#000"/><path d="M3 17.6 L9 11.8" stroke="#fff" stroke-width="0.6" stroke-dasharray="0.8 0.8"/><path d="M12 1.2 H16 L19 4.2 V8 L15.6 11.2 H11.8 L9 8.4 V4.2 Z" fill="#dedede" stroke="#000" stroke-width="1.9"/><path d="M10.8 3.6 L16.6 9.4" stroke="#111" stroke-width="1.1"/><path d="M13.6 3 L17.6 7 M10.2 6.2 L13.4 9.4" stroke="#8a8a8a" stroke-width="0.8" stroke-dasharray="1 0.8"/></svg></div>
<div style="left:1059px;top:90px;width:150px;height:21px;border:1px solid #a0a0a0;border-radius:4px;background:linear-gradient(#ffffff,#f6f6f6 45%,#e9e9e9 55%,#f4f4f4);box-shadow:0 1px 0 rgba(0,0,0,.08)"><svg width="8" height="13" style="left:136px;top:3px"><path d="M1 5 L4 1.5 L7 5 Z M1 8 L4 11.5 L7 8 Z" fill="#333"/></svg></div>
<div style="left:1210px;top:90px;width:151px;height:21px;border:1px solid #a0a0a0;border-radius:4px;background:linear-gradient(#ffffff,#f6f6f6 45%,#e9e9e9 55%,#f4f4f4);box-shadow:0 1px 0 rgba(0,0,0,.08)"><svg width="8" height="13" style="left:137px;top:3px"><path d="M1 5 L4 1.5 L7 5 Z M1 8 L4 11.5 L7 8 Z" fill="#333"/></svg></div>
<div class="t" style="left:768.50px;top:92.77px;font-size:13.5px;letter-spacing:0.275px;color:#111;">Core Au...</div>
<div class="t" style="left:899.00px;top:92.77px;font-size:13.5px;letter-spacing:0.654px;color:#111;">Built-in Output</div>
<div class="t" style="left:1068.00px;top:92.77px;font-size:13.5px;letter-spacing:0.531px;color:#111;">Built-in Microph</div>
<div class="t" style="left:1219.70px;top:92.77px;font-size:13.5px;letter-spacing:0.360px;color:#111;">1 (Mono) Input...</div>
<div style="left:57px;top:114px;width:1844px;height:27px;background:#e4e4e4;border-top:1px solid #f6f6f6"></div>
<div style="left:57px;top:114px;width:1px;height:27px;background:#fafafa"></div>
<div style="left:1899px;top:114px;width:2px;height:27px;background:#b8b8cc"></div>
<div style="left:57px;top:141px;width:1844px;height:1px;background:#000"></div>
<div style="left:57px;top:140px;width:1842px;height:1px;background:#d2d2dc"></div>
<div style="left:98px;top:135px;width:1px;height:5px;background:#000"></div>
<div style="left:147px;top:137px;width:1px;height:3px;background:#000"></div>
<div style="left:195px;top:135px;width:1px;height:5px;background:#000"></div>
<div style="left:244px;top:137px;width:1px;height:3px;background:#000"></div>
<div style="left:292px;top:135px;width:1px;height:5px;background:#000"></div>
<div style="left:341px;top:137px;width:1px;height:3px;background:#000"></div>
<div style="left:389px;top:135px;width:1px;height:5px;background:#000"></div>
<div style="left:438px;top:137px;width:1px;height:3px;background:#000"></div>
<div style="left:486px;top:135px;width:1px;height:5px;background:#000"></div>
<div style="left:535px;top:137px;width:1px;height:3px;background:#000"></div>
<div style="left:584px;top:135px;width:1px;height:5px;background:#000"></div>
<div style="left:632px;top:137px;width:1px;height:3px;background:#000"></div>
<div style="left:681px;top:135px;width:1px;height:5px;background:#000"></div>
<div style="left:729px;top:137px;width:1px;height:3px;background:#000"></div>
<div style="left:778px;top:135px;width:1px;height:5px;background:#000"></div>
<div style="left:826px;top:137px;width:1px;height:3px;background:#000"></div>
<div style="left:875px;top:135px;width:1px;height:5px;background:#000"></div>
<div style="left:923px;top:137px;width:1px;height:3px;background:#000"></div>
<div style="left:972px;top:135px;width:1px;height:5px;background:#000"></div>
<div style="left:1020px;top:137px;width:1px;height:3px;background:#000"></div>
<div style="left:1069px;top:135px;width:1px;height:5px;background:#000"></div>
<div style="left:1117px;top:137px;width:1px;height:3px;background:#000"></div>
<div style="left:1166px;top:135px;width:1px;height:5px;background:#000"></div>
<div style="left:1214px;top:137px;width:1px;height:3px;background:#000"></div>
<div style="left:1263px;top:135px;width:1px;height:5px;background:#000"></div>
<div style="left:1311px;top:137px;width:1px;height:3px;background:#000"></div>
<div style="left:1360px;top:135px;width:1px;height:5px;background:#000"></div>
<div style="left:1409px;top:137px;width:1px;height:3px;background:#000"></div>
<div style="left:1457px;top:135px;width:1px;height:5px;background:#000"></div>
<div style="left:1506px;top:137px;width:1px;height:3px;background:#000"></div>
<div style="left:1554px;top:135px;width:1px;height:5px;background:#000"></div>
<div style="left:1603px;top:137px;width:1px;height:3px;background:#000"></div>
<div style="left:1651px;top:135px;width:1px;height:5px;background:#000"></div>
<div style="left:1700px;top:137px;width:1px;height:3px;background:#000"></div>
<div style="left:1748px;top:135px;width:1px;height:5px;background:#000"></div>
<div style="left:1797px;top:137px;width:1px;height:3px;background:#000"></div>
<div style="left:1845px;top:135px;width:1px;height:5px;background:#000"></div>
<div style="left:1894px;top:137px;width:1px;height:3px;background:#000"></div>
<div style="left:84px;top:127px;width:6px;height:2px;background:#222"></div>
<div class="t" style="left:95.90px;top:120.90px;font-size:13px;font-weight:bold;-webkit-text-stroke:0;letter-spacing:-0.536px;">1.0</div>
<div class="t" style="left:187.10px;top:120.90px;font-size:13px;font-weight:bold;-webkit-text-stroke:0;letter-spacing:-0.436px;">0.0</div>
<div class="t" style="left:284.10px;top:120.90px;font-size:13px;font-weight:bold;-webkit-text-stroke:0;letter-spacing:-0.436px;">1.0</div>
<div class="t" style="left:381.10px;top:120.90px;font-size:13px;font-weight:bold;-webkit-text-stroke:0;letter-spacing:-0.436px;">2.0</div>
<div class="t" style="left:478.10px;top:120.90px;font-size:13px;font-weight:bold;-webkit-text-stroke:0;letter-spacing:-0.436px;">3.0</div>
<div class="t" style="left:576.10px;top:120.90px;font-size:13px;font-weight:bold;-webkit-text-stroke:0;letter-spacing:-0.436px;">4.0</div>
<div class="t" style="left:673.10px;top:120.90px;font-size:13px;font-weight:bold;-webkit-text-stroke:0;letter-spacing:-0.436px;">5.0</div>
<div class="t" style="left:770.10px;top:120.90px;font-size:13px;font-weight:bold;-webkit-text-stroke:0;letter-spacing:-0.436px;">6.0</div>
<div class="t" style="left:867.10px;top:120.90px;font-size:13px;font-weight:bold;-webkit-text-stroke:0;letter-spacing:-0.436px;">7.0</div>
<div class="t" style="left:964.10px;top:120.90px;font-size:13px;font-weight:bold;-webkit-text-stroke:0;letter-spacing:-0.436px;">8.0</div>
<div class="t" style="left:1061.10px;top:120.90px;font-size:13px;font-weight:bold;-webkit-text-stroke:0;letter-spacing:-0.436px;">9.0</div>
<div class="t" style="left:1154.40px;top:120.90px;font-size:13px;font-weight:bold;-webkit-text-stroke:0;letter-spacing:-0.234px;">10.0</div>
<div class="t" style="left:1251.40px;top:120.90px;font-size:13px;font-weight:bold;-webkit-text-stroke:0;letter-spacing:0.005px;">11.0</div>
<div class="t" style="left:1348.40px;top:120.90px;font-size:13px;font-weight:bold;-webkit-text-stroke:0;letter-spacing:-0.234px;">12.0</div>
<div class="t" style="left:1445.40px;top:120.90px;font-size:13px;font-weight:bold;-webkit-text-stroke:0;letter-spacing:-0.234px;">13.0</div>
<div class="t" style="left:1542.40px;top:120.90px;font-size:13px;font-weight:bold;-webkit-text-stroke:0;letter-spacing:-0.234px;">14.0</div>
<div class="t" style="left:1639.40px;top:120.90px;font-size:13px;font-weight:bold;-webkit-text-stroke:0;letter-spacing:-0.234px;">15.0</div>
<div class="t" style="left:1736.40px;top:120.90px;font-size:13px;font-weight:bold;-webkit-text-stroke:0;letter-spacing:-0.234px;">16.0</div>
<div class="t" style="left:1833.40px;top:120.90px;font-size:13px;font-weight:bold;-webkit-text-stroke:0;letter-spacing:-0.234px;">17.0</div>
<div style="left:1302px;top:114px;width:1px;height:27px;background:#000"></div>
<svg width="10" height="16" style="left:1302px;top:124px"><path d="M7.5 1.5 V14.5 L1.5 8 Z" fill="#d8d8d8" stroke="#a8a8a8" stroke-width="1"/></svg>
<div style="left:57px;top:142px;width:1828px;height:936px;background:#a09fb0"></div>
<div style="left:1885px;top:142px;width:16px;height:936px;background:linear-gradient(90deg,#ececec,#f6f6f6 30%,#fdfdfd 70%,#f2f2f2)"></div>
<div style="left:57px;top:1078px;width:1844px;height:16px;background:#ececec"></div>
<div style="left:193px;top:1079px;width:1692px;height:15px;background:linear-gradient(#f2f2f2,#fbfbfb 40%,#ffffff 70%,#f6f6f6)"></div>
<div style="left:58px;top:143px;width:1826px;height:430px;background:#f8f490;box-shadow:inset 0 0 0 1px #d8d49c"></div>
<div style="left:61px;top:146px;width:1820px;height:424px;background:#000"></div>
<div style="left:62px;top:147px;width:95px;height:421px;background:#c5c5d0"></div>
<div style="left:62px;top:147px;width:1px;height:421px;background:#f4f4f8"></div>
<div style="left:157px;top:147px;width:1px;height:421px;background:#000"></div>
<div style="left:158px;top:147px;width:1px;height:421px;background:#f8f8fc"></div>
<div style="left:159px;top:147px;width:34px;height:421px;background:#c5c5d0"></div>
<div style="left:193px;top:147px;width:1px;height:421px;background:#a6a6bc"></div>
<div style="left:194px;top:147px;width:1685px;height:421px;background:#dfdfdf"></div>
<div style="left:62px;top:147px;width:15px;height:15px;background:#c5c5d0;border-top:1px solid #fafafc;border-left:1px solid #fafafc"><svg width="12" height="12" style="left:2px;top:2px"><path d="M2.5 3 L9.5 10 M9.5 3 L2.5 10" stroke="#000" stroke-width="2"/></svg></div>
<div style="left:77px;top:147px;width:1px;height:15px;background:#a8a8bc"></div>
<div style="left:78px;top:147px;width:79px;height:15px;background:#c5c5d0;border-top:1px solid #fafafc;border-left:1px solid #fafafc"><svg width="12" height="8" style="left:64px;top:4px"><path d="M0.5 0.5 H11.5 L6 7 Z" fill="#000"/></svg></div>
<div class="t" style="left:80.40px;top:149.63px;font-size:11.3px;letter-spacing:-0.191px;">Audio Trac</div>
<div style="left:62px;top:162px;width:95px;height:2px;background:#a8a8bc"></div>
<div class="t" style="left:65.50px;top:164.12px;font-size:11.2px;letter-spacing:-0.182px;">Mono, 44100Hz</div>
<div class="t" style="left:65.50px;top:180.42px;font-size:11.2px;letter-spacing:0.272px;">32-bit float</div>
<div style="left:62px;top:195px;width:95px;height:2px;background:#a8a8bc"></div>
<div style="left:62px;top:197px;width:46px;height:14px;background:#c5c5d0;border-left:1px solid #fafafc;border-top:1px solid #fafafc"></div>
<div class="t" style="left:73.60px;top:197.92px;font-size:11.2px;letter-spacing:-0.667px;">Mute</div>
<div style="left:108px;top:197px;width:2px;height:14px;background:#a8a8bc"></div>
<div style="left:110px;top:197px;width:47px;height:14px;background:#c5c5d0;border-left:1px solid #fafafc;border-top:1px solid #fafafc"></div>
<div class="t" style="left:122.00px;top:197.92px;font-size:11.2px;letter-spacing:-0.806px;">Solo</div>
<div style="left:62px;top:211px;width:95px;height:2px;background:#a8a8bc"></div>
<div style="left:73px;top:233px;width:76px;height:1px;background:#9a9ab4"></div>
<div style="left:74px;top:229px;width:1px;height:4px;background:#fafafc"></div>
<div style="left:81px;top:230px;width:1px;height:2px;background:#fafafc"></div>
<div style="left:88px;top:230px;width:1px;height:2px;background:#fafafc"></div>
<div style="left:96px;top:230px;width:1px;height:2px;background:#fafafc"></div>
<div style="left:103px;top:230px;width:1px;height:2px;background:#fafafc"></div>
<div style="left:110px;top:230px;width:1px;height:2px;background:#fafafc"></div>
<div style="left:117px;top:230px;width:1px;height:2px;background:#fafafc"></div>
<div style="left:124px;top:230px;width:1px;height:2px;background:#fafafc"></div>
<div style="left:132px;top:230px;width:1px;height:2px;background:#fafafc"></div>
<div style="left:139px;top:230px;width:1px;height:2px;background:#fafafc"></div>
<div style="left:146px;top:229px;width:1px;height:4px;background:#fafafc"></div>
<div class="t" style="left:73px;top:217px;font-size:10px;font-weight:bold">&ndash;</div>
<div class="t" style="left:140px;top:217px;font-size:10px;font-weight:bold">+</div>
<svg width="14" height="17" style="left:102px;top:224px"><path d="M3.5 1.5 H10.5 L12 3 V9.5 L7 14.5 L2 9.5 V3 Z" fill="#d2d2ea" stroke="#000" stroke-width="1.2"/><path d="M3.2 3 V9.5 L6.5 13 M3.5 2.6 H10" stroke="#fff" stroke-width="1" fill="none"/><path d="M5.5 5.5 H9 M5.5 8.5 H9" stroke="#fff" stroke-width="1"/><path d="M5.5 6.7 H9 M5.5 9.7 H9" stroke="#9898c4" stroke-width="0.9"/></svg>
<div style="left:73px;top:263px;width:76px;height:1px;background:#9a9ab4"></div>
<div style="left:74px;top:259px;width:1px;height:4px;background:#fafafc"></div>
<div style="left:81px;top:260px;width:1px;height:2px;background:#fafafc"></div>
<div style="left:88px;top:260px;width:1px;height:2px;background:#fafafc"></div>
<div style="left:96px;top:260px;width:1px;height:2px;background:#fafafc"></div>
<div style="left:103px;top:260px;width:1px;height:2px;background:#fafafc"></div>
<div style="left:110px;top:260px;width:1px;height:2px;background:#fafafc"></div>
<div style="left:117px;top:260px;width:1px;height:2px;background:#fafafc"></div>
<div style="left:124px;top:260px;width:1px;height:2px;background:#fafafc"></div>
<div style="left:132px;top:260px;width:1px;height:2px;background:#fafafc"></div>
<div style="left:139px;top:260px;width:1px;height:2px;background:#fafafc"></div>
<div style="left:146px;top:259px;width:1px;height:4px;background:#fafafc"></div>
<div class="t" style="left:73px;top:248px;font-size:9px">L</div>
<div class="t" style="left:140px;top:248px;font-size:9px">R</div>
<svg width="14" height="17" style="left:102px;top:254px"><path d="M3.5 1.5 H10.5 L12 3 V9.5 L7 14.5 L2 9.5 V3 Z" fill="#d2d2ea" stroke="#000" stroke-width="1.2"/><path d="M3.2 3 V9.5 L6.5 13 M3.5 2.6 H10" stroke="#fff" stroke-width="1" fill="none"/><path d="M5.5 5.5 H9 M5.5 8.5 H9" stroke="#fff" stroke-width="1"/><path d="M5.5 6.7 H9 M5.5 9.7 H9" stroke="#9898c4" stroke-width="0.9"/></svg>
<div style="left:80px;top:550px;width:61px;height:18px;border:1px solid #a8a8bc;border-bottom:none;box-shadow:inset 1px 1px 0 #fafafc;background:#c5c5d0"><svg width="14" height="8" style="left:23px;top:5px"><path d="M1 7 L7 1 L13 7 Z" fill="#a0a0b8"/></svg></div>
<div style="left:194px;top:147px;width:456px;height:421px;background:#cbcbcb"></div>
<div style="left:194px;top:252px;width:456px;height:211px;background:#dfdfdf"></div>
<div style="left:194px;top:147px;width:456px;height:4px;background:#8088e0"></div>
<div style="left:194px;top:564px;width:456px;height:4px;background:#8088e0"></div>
<div style="left:650px;top:147px;width:1px;height:421px;background:#8c8c8c"></div>
<div style="left:1302px;top:147px;width:1px;height:421px;background:#000"></div>
<div style="left:189px;top:546px;width:4px;height:1px;background:#000"></div>
<div style="left:189px;top:525px;width:4px;height:1px;background:#000"></div>
<div style="left:189px;top:504px;width:4px;height:1px;background:#000"></div>
<div style="left:189px;top:483px;width:4px;height:1px;background:#000"></div>
<div style="left:188px;top:462px;width:5px;height:1px;background:#000"></div>
<div style="left:189px;top:441px;width:4px;height:1px;background:#000"></div>
<div style="left:189px;top:420px;width:4px;height:1px;background:#000"></div>
<div style="left:189px;top:399px;width:4px;height:1px;background:#000"></div>
<div style="left:189px;top:378px;width:4px;height:1px;background:#000"></div>
<div style="left:188px;top:357px;width:5px;height:1px;background:#000"></div>
<div style="left:189px;top:336px;width:4px;height:1px;background:#000"></div>
<div style="left:189px;top:315px;width:4px;height:1px;background:#000"></div>
<div style="left:189px;top:294px;width:4px;height:1px;background:#000"></div>
<div style="left:189px;top:273px;width:4px;height:1px;background:#000"></div>
<div style="left:188px;top:252px;width:5px;height:1px;background:#000"></div>
<div style="left:189px;top:231px;width:4px;height:1px;background:#000"></div>
<div style="left:189px;top:210px;width:4px;height:1px;background:#000"></div>
<div style="left:189px;top:189px;width:4px;height:1px;background:#000"></div>
<div style="left:189px;top:168px;width:4px;height:1px;background:#000"></div>
<div style="left:189px;top:168px;width:4px;height:1px;background:#000"></div>
<div class="t" style="left:170.10px;top:149.63px;font-size:11.3px;font-weight:bold;-webkit-text-stroke:0;letter-spacing:0.846px;">1.0</div>
<div class="t" style="left:170.10px;top:183.63px;font-size:11.3px;letter-spacing:0.846px;">0.8</div>
<div class="t" style="left:170.10px;top:204.63px;font-size:11.3px;letter-spacing:0.846px;">0.7</div>
<div class="t" style="left:170.10px;top:225.63px;font-size:11.3px;letter-spacing:0.846px;">0.6</div>
<div class="t" style="left:170.10px;top:246.63px;font-size:11.3px;font-weight:bold;-webkit-text-stroke:0;letter-spacing:0.846px;">0.5</div>
<div class="t" style="left:170.10px;top:267.63px;font-size:11.3px;letter-spacing:0.846px;">0.4</div>
<div class="t" style="left:170.10px;top:288.63px;font-size:11.3px;letter-spacing:0.846px;">0.3</div>
<div class="t" style="left:170.10px;top:309.63px;font-size:11.3px;letter-spacing:0.846px;">0.2</div>
<div class="t" style="left:170.10px;top:330.63px;font-size:11.3px;letter-spacing:0.846px;">0.1</div>
<div class="t" style="left:170.10px;top:351.63px;font-size:11.3px;font-weight:bold;-webkit-text-stroke:0;letter-spacing:0.846px;">0.0</div>
<div class="t" style="left:170.10px;top:372.63px;font-size:11.3px;letter-spacing:0.846px;">0.1</div>
<div style="left:163px;top:377.0px;width:5.8px;height:1.8px;background:#555"></div>
<div class="t" style="left:170.10px;top:393.63px;font-size:11.3px;letter-spacing:0.846px;">0.2</div>
<div style="left:163px;top:398.0px;width:5.8px;height:1.8px;background:#555"></div>
<div class="t" style="left:170.10px;top:414.63px;font-size:11.3px;letter-spacing:0.846px;">0.3</div>
<div style="left:163px;top:419.0px;width:5.8px;height:1.8px;background:#555"></div>
<div class="t" style="left:170.10px;top:435.63px;font-size:11.3px;letter-spacing:0.846px;">0.4</div>
<div style="left:163px;top:440.0px;width:5.8px;height:1.8px;background:#555"></div>
<div class="t" style="left:170.10px;top:456.63px;font-size:11.3px;font-weight:bold;-webkit-text-stroke:0;letter-spacing:0.846px;">0.5</div>
<div style="left:163px;top:461.0px;width:5.8px;height:2.2px;background:#222"></div>
<div class="t" style="left:170.10px;top:477.63px;font-size:11.3px;letter-spacing:0.846px;">0.6</div>
<div style="left:163px;top:482.0px;width:5.8px;height:1.8px;background:#555"></div>
<div class="t" style="left:170.10px;top:498.63px;font-size:11.3px;letter-spacing:0.846px;">0.7</div>
<div style="left:163px;top:503.0px;width:5.8px;height:1.8px;background:#555"></div>
<div class="t" style="left:170.10px;top:519.63px;font-size:11.3px;letter-spacing:0.846px;">0.8</div>
<div style="left:163px;top:524.0px;width:5.8px;height:1.8px;background:#555"></div>
<div class="t" style="left:170.10px;top:554.63px;font-size:11.3px;font-weight:bold;-webkit-text-stroke:0;letter-spacing:0.846px;">1.0</div>
<div style="left:163px;top:559.0px;width:5.8px;height:2.2px;background:#222"></div>
<svg width="10" height="10" style="left:195px;top:149.5px"><path d="M1.2 4.5 H8.5 M4.5 1 L1.2 4.5 L4.5 8" stroke="#000" stroke-width="1.1" fill="none"/></svg>
<svg width="10" height="10" style="left:195px;top:555.5px"><path d="M1.2 4.5 H8.5 M4.5 1 L1.2 4.5 L4.5 8" stroke="#000" stroke-width="1.1" fill="none"/></svg>
<div style="left:61px;top:574px;width:1820px;height:296px;background:#000"></div>
<div style="left:62px;top:575px;width:95px;height:293px;background:#e4e4e4"></div>
<div style="left:62px;top:575px;width:1px;height:293px;background:#fafafa"></div>
<div style="left:157px;top:575px;width:1px;height:293px;background:#000"></div>
<div style="left:158px;top:575px;width:1px;height:293px;background:#fafafa"></div>
<div style="left:159px;top:575px;width:34px;height:293px;background:#e4e4e4"></div>
<div style="left:193px;top:575px;width:1px;height:293px;background:#a6a6bc"></div>
<div style="left:194px;top:575px;width:1685px;height:293px;background:#dfdfdf"></div>
<div style="left:62px;top:575px;width:15px;height:15px;background:#e4e4e4;border-top:1px solid #fafafc;border-left:1px solid #fafafc"><svg width="12" height="12" style="left:2px;top:2px"><path d="M2.5 3 L9.5 10 M9.5 3 L2.5 10" stroke="#000" stroke-width="2"/></svg></div>
<div style="left:77px;top:575px;width:1px;height:15px;background:#a8a8bc"></div>
<div style="left:78px;top:575px;width:79px;height:15px;background:#e4e4e4;border-top:1px solid #fafafc;border-left:1px solid #fafafc"><svg width="12" height="8" style="left:64px;top:4px"><path d="M0.5 0.5 H11.5 L6 7 Z" fill="#000"/></svg></div>
<div class="t" style="left:80.40px;top:577.63px;font-size:11.3px;letter-spacing:-0.483px;">12 Dreams</div>
<div style="left:62px;top:590px;width:95px;height:2px;background:#a8a8bc"></div>
<div class="t" style="left:65.50px;top:592.12px;font-size:11.2px;letter-spacing:-0.240px;">Stereo, 44100Hz</div>
<div class="t" style="left:65.50px;top:608.42px;font-size:11.2px;letter-spacing:0.272px;">32-bit float</div>
<div style="left:62px;top:623px;width:95px;height:2px;background:#a8a8bc"></div>
<div style="left:62px;top:625px;width:46px;height:14px;background:#e4e4e4;border-left:1px solid #fafafc;border-top:1px solid #fafafc"></div>
<div class="t" style="left:73.60px;top:625.92px;font-size:11.2px;letter-spacing:-0.667px;">Mute</div>
<div style="left:108px;top:625px;width:2px;height:14px;background:#a8a8bc"></div>
<div style="left:110px;top:625px;width:47px;height:14px;background:#e4e4e4;border-left:1px solid #fafafc;border-top:1px solid #fafafc"></div>
<div class="t" style="left:122.00px;top:625.92px;font-size:11.2px;letter-spacing:-0.806px;">Solo</div>
<div style="left:62px;top:639px;width:95px;height:2px;background:#a8a8bc"></div>
<div style="left:73px;top:661px;width:76px;height:1px;background:#9a9ab4"></div>
<div style="left:74px;top:657px;width:1px;height:4px;background:#fafafc"></div>
<div style="left:81px;top:658px;width:1px;height:2px;background:#fafafc"></div>
<div style="left:88px;top:658px;width:1px;height:2px;background:#fafafc"></div>
<div style="left:96px;top:658px;width:1px;height:2px;background:#fafafc"></div>
<div style="left:103px;top:658px;width:1px;height:2px;background:#fafafc"></div>
<div style="left:110px;top:658px;width:1px;height:2px;background:#fafafc"></div>
<div style="left:117px;top:658px;width:1px;height:2px;background:#fafafc"></div>
<div style="left:124px;top:658px;width:1px;height:2px;background:#fafafc"></div>
<div style="left:132px;top:658px;width:1px;height:2px;background:#fafafc"></div>
<div style="left:139px;top:658px;width:1px;height:2px;background:#fafafc"></div>
<div style="left:146px;top:657px;width:1px;height:4px;background:#fafafc"></div>
<div class="t" style="left:73px;top:645px;font-size:10px;font-weight:bold">&ndash;</div>
<div class="t" style="left:140px;top:645px;font-size:10px;font-weight:bold">+</div>
<svg width="14" height="17" style="left:102px;top:652px"><path d="M3.5 1.5 H10.5 L12 3 V9.5 L7 14.5 L2 9.5 V3 Z" fill="#d2d2ea" stroke="#000" stroke-width="1.2"/><path d="M3.2 3 V9.5 L6.5 13 M3.5 2.6 H10" stroke="#fff" stroke-width="1" fill="none"/><path d="M5.5 5.5 H9 M5.5 8.5 H9" stroke="#fff" stroke-width="1"/><path d="M5.5 6.7 H9 M5.5 9.7 H9" stroke="#9898c4" stroke-width="0.9"/></svg>
<div style="left:73px;top:691px;width:76px;height:1px;background:#9a9ab4"></div>
<div style="left:74px;top:687px;width:1px;height:4px;background:#fafafc"></div>
<div style="left:81px;top:688px;width:1px;height:2px;background:#fafafc"></div>
<div style="left:88px;top:688px;width:1px;height:2px;background:#fafafc"></div>
<div style="left:96px;top:688px;width:1px;height:2px;background:#fafafc"></div>
<div style="left:103px;top:688px;width:1px;height:2px;background:#fafafc"></div>
<div style="left:110px;top:688px;width:1px;height:2px;background:#fafafc"></div>
<div style="left:117px;top:688px;width:1px;height:2px;background:#fafafc"></div>
<div style="left:124px;top:688px;width:1px;height:2px;background:#fafafc"></div>
<div style="left:132px;top:688px;width:1px;height:2px;background:#fafafc"></div>
<div style="left:139px;top:688px;width:1px;height:2px;background:#fafafc"></div>
<div style="left:146px;top:687px;width:1px;height:4px;background:#fafafc"></div>
<div class="t" style="left:73px;top:676px;font-size:9px">L</div>
<div class="t" style="left:140px;top:676px;font-size:9px">R</div>
<svg width="14" height="17" style="left:102px;top:682px"><path d="M3.5 1.5 H10.5 L12 3 V9.5 L7 14.5 L2 9.5 V3 Z" fill="#d2d2ea" stroke="#000" stroke-width="1.2"/><path d="M3.2 3 V9.5 L6.5 13 M3.5 2.6 H10" stroke="#fff" stroke-width="1" fill="none"/><path d="M5.5 5.5 H9 M5.5 8.5 H9" stroke="#fff" stroke-width="1"/><path d="M5.5 6.7 H9 M5.5 9.7 H9" stroke="#9898c4" stroke-width="0.9"/></svg>
<div style="left:80px;top:850px;width:61px;height:18px;border:1px solid #a8a8bc;border-bottom:none;box-shadow:inset 1px 1px 0 #fafafc;background:#e4e4e4"><svg width="14" height="8" style="left:23px;top:5px"><path d="M1 7 L7 1 L13 7 Z" fill="#a0a0b8"/></svg></div>
<div style="left:194px;top:718px;width:1685px;height:7px;background:#a09fb0;border-top:1px solid #000;border-bottom:1px solid #000"></div>
<div style="left:194px;top:719px;width:1685px;height:1px;background:#b0afc0"></div>
<div style="left:159px;top:717px;width:29px;height:1px;background:#a6a6bc"></div>
<div style="left:188px;top:717px;width:5px;height:1px;background:#000"></div>
<div style="left:159px;top:725px;width:34px;height:1px;background:#fafafa"></div>
<div style="left:194px;top:575px;width:969px;height:143px;background:#cbcbcb"></div>
<div style="left:194px;top:611px;width:969px;height:72px;background:#dfdfdf"></div>
<div style="left:194px;top:575px;width:969px;height:4px;background:#8088e0"></div>
<div style="left:194px;top:714px;width:969px;height:4px;background:#8088e0"></div>
<div style="left:1163px;top:575px;width:1px;height:143px;background:#8c8c8c"></div>
<div style="left:1164px;top:575px;width:715px;height:1px;background:#f0f0f0"></div>
<div style="left:188px;top:611px;width:5px;height:1px;background:#000"></div>
<div style="left:188px;top:646px;width:5px;height:1px;background:#000"></div>
<div style="left:188px;top:682px;width:5px;height:1px;background:#000"></div>
<div class="t" style="left:170.10px;top:577.63px;font-size:11.3px;font-weight:bold;-webkit-text-stroke:0;letter-spacing:0.846px;">1.0</div>
<div class="t" style="left:170.10px;top:605.63px;font-size:11.3px;letter-spacing:0.846px;">0.5</div>
<div class="t" style="left:170.10px;top:640.63px;font-size:11.3px;font-weight:bold;-webkit-text-stroke:0;letter-spacing:0.846px;">0.0</div>
<div class="t" style="left:170.10px;top:676.63px;font-size:11.3px;letter-spacing:0.846px;">0.5</div>
<div style="left:163px;top:681.0px;width:5.8px;height:1.8px;background:#555"></div>
<div class="t" style="left:170.10px;top:704.63px;font-size:11.3px;font-weight:bold;-webkit-text-stroke:0;letter-spacing:0.846px;">1.0</div>
<div style="left:163px;top:709.0px;width:5.8px;height:2.2px;background:#222"></div>
<div style="left:194px;top:725px;width:969px;height:143px;background:#cbcbcb"></div>
<div style="left:194px;top:761px;width:969px;height:72px;background:#dfdfdf"></div>
<div style="left:194px;top:725px;width:969px;height:4px;background:#8088e0"></div>
<div style="left:194px;top:864px;width:969px;height:4px;background:#8088e0"></div>
<div style="left:1163px;top:725px;width:1px;height:143px;background:#8c8c8c"></div>
<div style="left:1164px;top:725px;width:715px;height:1px;background:#f0f0f0"></div>
<div style="left:188px;top:761px;width:5px;height:1px;background:#000"></div>
<div style="left:188px;top:796px;width:5px;height:1px;background:#000"></div>
<div style="left:188px;top:832px;width:5px;height:1px;background:#000"></div>
<div class="t" style="left:170.10px;top:727.63px;font-size:11.3px;font-weight:bold;-webkit-text-stroke:0;letter-spacing:0.846px;">1.0</div>
<div class="t" style="left:170.10px;top:755.63px;font-size:11.3px;letter-spacing:0.846px;">0.5</div>
<div class="t" style="left:170.10px;top:790.63px;font-size:11.3px;font-weight:bold;-webkit-text-stroke:0;letter-spacing:0.846px;">0.0</div>
<div class="t" style="left:170.10px;top:826.63px;font-size:11.3px;letter-spacing:0.846px;">0.5</div>
<div style="left:163px;top:831.0px;width:5.8px;height:1.8px;background:#555"></div>
<div class="t" style="left:170.10px;top:854.63px;font-size:11.3px;font-weight:bold;-webkit-text-stroke:0;letter-spacing:0.846px;">1.0</div>
<div style="left:163px;top:859.0px;width:5.8px;height:2.2px;background:#222"></div>
<div style="left:0;top:0;width:0;height:0"><svg width="1958" height="1248" style="left:0;top:0" shape-rendering="crispEdges"><path d="M194 356V356H195V354H196V354H197V354H198V355H199V355H200V355H201V355H202V354H203V354H204V355H205V354H206V354H207V354H208V354H209V353H210V352H211V350H212V351H213V353H214V351H215V351H216V350H217V353H218V351H219V351H220V352H221V354H222V353H223V352H224V352H225V351H226V352H227V351H228V351H229V353H230V351H231V353H232V352H233V353H234V353H235V350H236V351H237V352H238V351H239V351H240V352H241V351H242V353H243V353H244V352H245V351H246V351H247V354H248V353H249V352H250V352H251V352H252V352H253V354H254V354H255V350H256V351H257V352H258V352H259V349H260V341H261V342H262V342H263V346H264V347H265V345H266V347H267V347H268V348H269V341H270V340H271V341H272V337H273V332H274V324H275V317H276V308H277V316H278V322H279V324H280V334H281V333H282V342H283V343H284V335H285V343H286V342H287V336H288V344H289V337H290V342H291V341H292V343H293V345H294V344H295V341H296V336H297V341H298V352H299V353H300V352H301V353H302V352H303V352H304V351H305V352H306V351H307V351H308V353H309V351H310V351H311V352H312V351H313V353H314V349H315V347H316V342H317V342H318V347H319V345H320V343H321V338H322V330H323V329H324V322H325V307H326V306H327V309H328V310H329V324H330V327H331V329H332V330H333V333H334V336H335V335H336V339H337V339H338V334H339V329H340V339H341V330H342V330H343V341H344V341H345V327H346V337H347V333H348V337H349V349H350V349H351V350H352V349H353V348H354V349H355V352H356V350H357V348H358V350H359V350H360V352H361V351H362V351H363V351H364V350H365V352H366V353H367V349H368V350H369V350H370V352H371V350H372V350H373V349H374V351H375V349H376V350H377V349H378V345H379V343H380V337H381V331H382V329H383V324H384V312H385V304H386V299H387V289H388V288H389V292H390V291H391V299H392V303H393V318H394V327H395V332H396V331H397V334H398V338H399V341H400V340H401V338H402V340H403V341H404V345H405V343H406V340H407V347H408V345H409V350H410V349H411V348H412V352H413V350H414V351H415V352H416V348H417V349H418V348H419V350H420V348H421V351H422V347H423V350H424V349H425V350H426V351H427V351H428V349H429V345H430V349H431V344H432V346H433V349H434V347H435V340H436V345H437V340H438V324H439V312H440V308H441V305H442V294H443V298H444V303H445V321H446V329H447V332H448V339H449V332H450V333H451V342H452V343H453V336H454V343H455V336H456V334H457V344H458V340H459V340H460V336H461V336H462V336H463V343H464V340H465V341H466V348H467V344H468V342H469V349H470V347H471V348H472V348H473V346H474V346H475V346H476V345H477V349H478V342H479V349H480V347H481V346H482V345H483V348H484V348H485V347H486V344H487V342H488V333H489V333H490V329H491V331H492V334H493V341H494V347H495V347H496V349H497V347H498V348H499V345H500V347H501V344H502V345H503V343H504V348H505V344H506V348H507V347H508V345H509V347H510V345H511V348H512V352H513V348H514V351H515V348H516V348H517V352H518V354H519V354H520V354H521V355H522V355H523V355H524V355H525V355H526V354H527V355H528V356H529V355H530V355H531V355H532V355H533V355H534V356H535V356H536V356H537V356H538V356H539V357H540V357H541V357H542V357H543V357H544V357H545V357H546V357H547V357H548V357H549V357H550V357H551V357H552V357H553V357H554V357H555V357H556V357H557V357H558V357H559V356H560V355H561V355H562V355H563V355H564V353H565V354H566V353H567V354H568V352H569V351H570V353H571V351H572V351H573V351H574V351H575V351H576V352H577V352H578V352H579V349H580V350H581V352H582V351H583V353H584V352H585V354H586V353H587V353H588V354H589V354H590V354H591V352H592V353H593V354H594V354H595V354H596V354H597V354H598V354H599V354H600V354H601V355H602V355H603V354H604V354H605V355H606V353H607V354H608V355H609V354H610V354H611V355H612V353H613V354H614V355H615V354H616V354H617V353H618V354H619V355H620V353H621V355H622V355H623V354H624V354H625V354H626V355H627V354H628V354H629V355H630V354H631V355H632V355H633V355H634V355H635V354H636V355H637V355H638V355H639V349H640V350H641V355H642V356H643V356H644V356H645V357H646V357H647V357H648V357H649V357H650V358H649V358H648V358H647V358H646V358H645V358H644V359H643V359H642V359H641V364H640V364H639V360H638V360H637V359H636V360H635V360H634V360H633V360H632V360H631V360H630V360H629V360H628V360H627V361H626V361H625V360H624V360H623V360H622V360H621V360H620V360H619V360H618V360H617V360H616V361H615V361H614V361H613V360H612V360H611V360H610V360H609V360H608V360H607V361H606V360H605V360H604V360H603V361H602V361H601V362H600V362H599V361H598V362H597V361H596V362H595V364H594V362H593V364H592V363H591V363H590V363H589V362H588V364H587V364H586V366H585V363H584V364H583V365H582V364H581V365H580V365H579V364H578V363H577V363H576V362H575V365H574V366H573V364H572V362H571V363H570V362H569V363H568V362H567V362H566V362H565V360H564V362H563V360H562V360H561V360H560V359H559V358H558V358H557V358H556V358H555V358H554V358H553V358H552V358H551V358H550V358H549V358H548V358H547V358H546V358H545V358H544V358H543V358H542V358H541V358H540V359H539V359H538V359H537V359H536V360H535V359H534V360H533V360H532V360H531V360H530V359H529V360H528V360H527V360H526V360H525V361H524V360H523V361H522V361H521V360H520V362H519V361H518V364H517V367H516V363H515V366H514V364H513V363H512V367H511V366H510V369H509V365H508V369H507V369H506V365H505V371H504V371H503V373H502V367H501V373H500V373H499V373H498V367H497V367H496V366H495V371H494V383H493V396H492V400H491V392H490V397H489V384H488V370H487V375H486V369H485V371H484V375H483V370H482V373H481V373H480V367H479V365H478V369H477V369H476V368H475V367H474V367H473V369H472V367H471V366H470V366H469V368H468V366H467V370H466V370H465V373H464V373H463V375H462V374H461V372H460V377H459V376H458V372H457V372H456V372H455V368H454V374H453V372H452V379H451V395H450V396H449V385H448V392H447V403H446V413H445V419H444V428H443V434H442V429H441V422H440V409H439V394H438V380H437V378H436V376H435V375H434V366H433V371H432V365H431V370H430V366H429V369H428V365H427V364H426V368H425V368H424V365H423V368H422V368H421V368H420V366H419V363H418V363H417V367H416V364H415V366H414V370H413V368H412V367H411V367H410V369H409V368H408V378H407V383H406V381H405V373H404V381H403V373H402V376H401V381H400V381H399V378H398V375H397V378H396V387H395V398H394V418H393V418H392V464H391V431H390V447H389V442H388V467H387V448H386V457H385V444H384V432H383V419H382V405H381V388H380V385H379V374H378V369H377V363H376V365H375V364H374V364H373V368H372V364H371V364H370V363H369V363H368V363H367V364H366V366H365V366H364V366H363V367H362V364H361V364H360V363H359V366H358V365H357V364H356V365H355V365H354V365H353V364H352V365H351V365H350V366H349V375H348V372H347V376H346V381H345V374H344V375H343V382H342V383H341V379H340V374H339V375H338V379H337V391H336V375H335V379H334V375H333V380H332V399H331V406H330V419H329V430H328V452H327V442H326V449H325V423H324V413H323V403H322V387H321V375H320V372H319V381H318V383H317V377H316V378H315V370H314V363H313V361H312V362H311V363H310V363H309V363H308V364H307V364H306V364H305V363H304V361H303V364H302V363H301V362H300V362H299V366H298V372H297V384H296V373H295V384H294V383H293V374H292V381H291V385H290V379H289V374H288V378H287V379H286V382H285V379H284V381H283V382H282V390H281V394H280V415H279V414H278V419H277V429H276V421H275V412H274V397H273V387H272V376H271V375H270V370H269V372H268V368H267V371H266V374H265V375H264V376H263V373H262V377H261V371H260V372H259V364H258V364H257V364H256V363H255V363H254V365H253V362H252V362H251V362H250V364H249V364H248V364H247V364H246V364H245V365H244V365H243V363H242V366H241V363H240V365H239V364H238V364H237V365H236V363H235V363H234V365H233V366H232V366H231V365H230V366H229V364H228V365H227V365H226V362H225V364H224V364H223V363H222V363H221V362H220V362H219V363H218V364H217V363H216V364H215V363H214V365H213V362H212V364H211V364H210V362H209V364H208V362H207V360H206V362H205V360H204V360H203V361H202V360H201V360H200V360H199V360H198V361H197V361H196V361H195V360H194Z" fill="#4252d2"/><path d="M194 356V356H195V356H196V356H197V356H198V355H199V355H200V356H201V355H202V356H203V355H204V355H205V355H206V355H207V355H208V355H209V355H210V354H211V354H212V354H213V354H214V354H215V354H216V354H217V354H218V354H219V354H220V354H221V354H222V354H223V354H224V354H225V354H226V354H227V354H228V354H229V354H230V354H231V354H232V354H233V354H234V354H235V354H236V354H237V354H238V354H239V354H240V354H241V354H242V354H243V354H244V354H245V354H246V354H247V354H248V354H249V354H250V354H251V354H252V354H253V354H254V354H255V354H256V354H257V354H258V353H259V352H260V350H261V349H262V349H263V350H264V350H265V350H266V350H267V350H268V349H269V349H270V349H271V349H272V349H273V347H274V344H275V343H276V341H277V343H278V343H279V345H280V346H281V347H282V348H283V348H284V349H285V348H286V348H287V348H288V348H289V348H290V348H291V348H292V348H293V349H294V348H295V348H296V348H297V349H298V353H299V354H300V354H301V354H302V354H303V354H304V355H305V355H306V354H307V354H308V354H309V354H310V354H311V354H312V354H313V354H314V353H315V350H316V349H317V349H318V349H319V349H320V350H321V350H322V348H323V345H324V342H325V340H326V341H327V341H328V339H329V342H330V344H331V346H332V347H333V346H334V346H335V346H336V346H337V346H338V346H339V346H340V345H341V346H342V346H343V346H344V346H345V345H346V346H347V345H348V347H349V351H350V353H351V353H352V353H353V353H354V353H355V354H356V354H357V354H358V353H359V354H360V354H361V354H362V353H363V354H364V354H365V354H366V354H367V354H368V353H369V353H370V353H371V354H372V353H373V353H374V353H375V353H376V353H377V353H378V352H379V350H380V349H381V347H382V345H383V341H384V340H385V339H386V336H387V337H388V337H389V337H390V336H391V339H392V341H393V343H394V345H395V347H396V348H397V348H398V348H399V347H400V348H401V348H402V348H403V349H404V348H405V348H406V349H407V350H408V352H409V352H410V353H411V353H412V352H413V353H414V352H415V353H416V352H417V352H418V352H419V352H420V352H421V352H422V352H423V353H424V352H425V353H426V353H427V352H428V352H429V352H430V352H431V351H432V351H433V351H434V351H435V351H436V349H437V348H438V345H439V342H440V339H441V338H442V338H443V336H444V340H445V341H446V344H447V348H448V346H449V347H450V347H451V348H452V347H453V347H454V347H455V347H456V347H457V347H458V348H459V347H460V347H461V348H462V349H463V349H464V349H465V351H466V351H467V350H468V351H469V351H470V351H471V351H472V351H473V351H474V351H475V351H476V351H477V350H478V351H479V351H480V351H481V351H482V351H483V351H484V350H485V351H486V350H487V350H488V349H489V347H490V346H491V346H492V347H493V350H494V351H495V351H496V351H497V351H498V351H499V351H500V351H501V352H502V352H503V351H504V351H505V351H506V352H507V351H508V351H509V352H510V352H511V353H512V354H513V353H514V353H515V353H516V353H517V354H518V355H519V355H520V355H521V355H522V355H523V356H524V356H525V356H526V356H527V356H528V356H529V356H530V356H531V356H532V356H533V356H534V356H535V356H536V356H537V356H538V357H539V357H540V357H541V357H542V357H543V357H544V357H545V357H546V357H547V357H548V357H549V357H550V357H551V357H552V357H553V357H554V357H555V357H556V357H557V357H558V357H559V357H560V356H561V356H562V355H563V355H564V355H565V355H566V355H567V355H568V354H569V354H570V354H571V354H572V354H573V354H574V354H575V353H576V354H577V354H578V354H579V354H580V354H581V354H582V354H583V354H584V354H585V354H586V354H587V354H588V355H589V355H590V355H591V355H592V355H593V355H594V355H595V355H596V355H597V355H598V355H599V355H600V355H601V355H602V355H603V355H604V355H605V355H606V355H607V355H608V355H609V355H610V355H611V355H612V355H613V355H614V355H615V355H616V355H617V355H618V355H619V355H620V355H621V355H622V355H623V355H624V355H625V355H626V356H627V355H628V355H629V356H630V356H631V356H632V356H633V356H634V356H635V356H636V356H637V356H638V356H639V354H640V354H641V356H642V357H643V357H644V357H645V357H646V357H647V357H648V357H649V357H650V358H649V358H648V358H647V358H646V358H645V358H644V358H643V358H642V359H641V361H640V361H639V359H638V359H637V359H636V359H635V359H634V359H633V359H632V359H631V359H630V359H629V359H628V359H627V359H626V359H625V359H624V359H623V360H622V360H621V359H620V359H619V360H618V359H617V359H616V360H615V359H614V360H613V359H612V360H611V359H610V360H609V360H608V360H607V360H606V360H605V360H604V360H603V360H602V360H601V360H600V360H599V360H598V360H597V360H596V360H595V360H594V360H593V360H592V361H591V361H590V361H589V361H588V361H587V361H586V361H585V361H584V361H583V361H582V361H581V362H580V361H579V361H578V362H577V362H576V362H575V362H574V361H573V361H572V361H571V361H570V361H569V360H568V360H567V360H566V360H565V360H564V360H563V360H562V359H561V359H560V358H559V358H558V358H557V358H556V358H555V358H554V358H553V358H552V358H551V358H550V358H549V358H548V358H547V358H546V358H545V358H544V358H543V358H542V358H541V358H540V358H539V358H538V359H537V359H536V359H535V359H534V359H533V359H532V359H531V359H530V359H529V359H528V359H527V359H526V359H525V359H524V359H523V360H522V359H521V359H520V360H519V360H518V361H517V362H516V362H515V362H514V362H513V362H512V363H511V363H510V363H509V363H508V364H507V363H506V364H505V365H504V365H503V365H502V364H501V364H500V365H499V365H498V365H497V364H496V364H495V365H494V369H493V371H492V374H491V372H490V372H489V368H488V367H487V367H486V366H485V367H484V366H483V367H482V366H481V366H480V364H479V363H478V363H477V363H476V363H475V363H474V363H473V363H472V363H471V363H470V363H469V363H468V363H467V364H466V364H465V365H464V367H463V366H462V366H461V366H460V366H459V366H458V365H457V366H456V365H455V366H454V366H453V366H452V367H451V371H450V370H449V371H448V371H447V375H446V376H445V381H444V382H443V381H442V381H441V376H440V373H439V371H438V367H437V367H436V365H435V364H434V364H433V365H432V364H431V365H430V364H429V363H428V363H427V363H426V363H425V362H424V362H423V362H422V363H421V363H420V363H419V363H418V362H417V363H416V362H415V363H414V363H413V363H412V363H411V363H410V363H409V365H408V367H407V369H406V369H405V369H404V369H403V369H402V368H401V369H400V369H399V369H398V369H397V369H396V370H395V374H394V377H393V378H392V382H391V382H390V385H389V385H388V387H387V388H386V384H385V383H384V382H383V378H382V376H381V372H380V368H379V366H378V363H377V362H376V362H375V362H374V362H373V362H372V362H371V362H370V362H369V362H368V362H367V362H366V362H365V362H364V362H363V362H362V362H361V362H360V362H359V362H358V362H357V362H356V362H355V362H354V362H353V362H352V362H351V361H350V363H349V366H348V368H347V368H346V368H345V368H344V368H343V368H342V368H341V368H340V368H339V368H338V369H337V368H336V368H335V369H334V368H333V368H332V373H331V375H330V380H329V382H328V382H327V382H326V384H325V382H324V378H323V374H322V370H321V369H320V369H319V369H318V368H317V368H316V367H315V363H314V361H313V361H312V361H311V361H310V361H309V361H308V361H307V361H306V361H305V361H304V360H303V361H302V361H301V360H300V361H299V363H298V367H297V370H296V369H295V368H294V369H293V370H292V370H291V368H290V368H289V368H288V368H287V368H286V368H285V368H284V368H283V368H282V370H281V374H280V376H279V378H278V380H277V381H276V378H275V376H274V373H273V369H272V366H271V366H270V366H269V365H268V365H267V366H266V365H265V366H264V365H263V366H262V365H261V365H260V363H259V362H258V361H257V361H256V361H255V361H254V361H253V361H252V361H251V361H250V361H249V361H248V361H247V361H246V361H245V361H244V361H243V361H242V361H241V362H240V361H239V361H238V361H237V361H236V361H235V361H234V361H233V362H232V361H231V362H230V361H229V361H228V361H227V361H226V361H225V361H224V361H223V361H222V361H221V361H220V361H219V361H218V361H217V361H216V361H215V361H214V362H213V361H212V361H211V361H210V361H209V360H208V360H207V360H206V360H205V360H204V359H203V360H202V360H201V360H200V360H199V359H198V360H197V359H196V359H195V359H194Z" fill="#7482e2"/></svg></div>
<div style="left:0;top:0;width:0;height:0"><svg width="1958" height="1248" style="left:0;top:0" shape-rendering="crispEdges"><path d="M194 646V646H195V646H196V646H197V646H198V646H199V646H200V646H201V646H202V646H203V646H204V646H205V646H206V646H207V646H208V646H209V646H210V646H211V646H212V643H213V632H214V631H215V632H216V634H217V634H218V636H219V636H220V635H221V636H222V636H223V637H224V637H225V638H226V638H227V638H228V639H229V638H230V640H231V639H232V640H233V642H234V641H235V641H236V641H237V641H238V641H239V641H240V641H241V641H242V641H243V641H244V641H245V641H246V641H247V642H248V642H249V642H250V642H251V641H252V639H253V638H254V638H255V638H256V638H257V638H258V639H259V639H260V639H261V639H262V640H263V639H264V638H265V639H266V638H267V639H268V639H269V640H270V640H271V638H272V638H273V638H274V639H275V638H276V638H277V639H278V640H279V639H280V639H281V639H282V639H283V638H284V637H285V636H286V637H287V637H288V636H289V637H290V636H291V637H292V637H293V636H294V636H295V635H296V637H297V635H298V636H299V637H300V637H301V637H302V636H303V637H304V638H305V636H306V634H307V634H308V636H309V634H310V636H311V634H312V633H313V633H314V634H315V633H316V633H317V633H318V633H319V636H320V634H321V633H322V633H323V634H324V634H325V635H326V637H327V638H328V636H329V636H330V638H331V633H332V635H333V634H334V636H335V640H336V642H337V641H338V641H339V641H340V641H341V641H342V641H343V639H344V636H345V633H346V633H347V633H348V634H349V635H350V634H351V633H352V634H353V630H354V633H355V633H356V634H357V633H358V636H359V636H360V635H361V634H362V633H363V635H364V634H365V634H366V633H367V634H368V634H369V635H370V634H371V634H372V635H373V635H374V634H375V637H376V637H377V637H378V637H379V635H380V635H381V636H382V636H383V635H384V636H385V637H386V636H387V636H388V637H389V632H390V634H391V636H392V635H393V636H394V634H395V634H396V636H397V636H398V635H399V636H400V636H401V638H402V637H403V638H404V635H405V636H406V637H407V637H408V635H409V637H410V634H411V635H412V637H413V635H414V636H415V635H416V635H417V635H418V635H419V636H420V637H421V636H422V635H423V637H424V637H425V637H426V635H427V635H428V638H429V638H430V637H431V635H432V635H433V635H434V635H435V635H436V634H437V636H438V634H439V636H440V634H441V633H442V634H443V635H444V634H445V634H446V636H447V635H448V631H449V634H450V633H451V635H452V636H453V634H454V634H455V632H456V632H457V635H458V632H459V633H460V634H461V634H462V636H463V635H464V635H465V636H466V635H467V635H468V634H469V634H470V634H471V634H472V634H473V635H474V634H475V636H476V634H477V635H478V635H479V636H480V635H481V634H482V634H483V636H484V635H485V635H486V635H487V633H488V633H489V633H490V634H491V635H492V635H493V634H494V634H495V634H496V635H497V634H498V635H499V636H500V635H501V635H502V635H503V637H504V636H505V635H506V635H507V635H508V636H509V637H510V635H511V637H512V634H513V633H514V634H515V634H516V633H517V630H518V631H519V634H520V633H521V634H522V633H523V636H524V633H525V637H526V635H527V636H528V637H529V637H530V639H531V639H532V638H533V629H534V630H535V634H536V634H537V635H538V635H539V633H540V636H541V634H542V633H543V633H544V631H545V634H546V634H547V634H548V635H549V634H550V631H551V635H552V635H553V636H554V637H555V636H556V635H557V636H558V636H559V635H560V636H561V635H562V637H563V635H564V637H565V637H566V637H567V636H568V637H569V637H570V636H571V635H572V636H573V635H574V637H575V636H576V637H577V636H578V636H579V636H580V637H581V637H582V637H583V636H584V636H585V636H586V636H587V635H588V636H589V637H590V636H591V634H592V636H593V636H594V635H595V637H596V634H597V635H598V637H599V641H600V642H601V642H602V643H603V642H604V642H605V642H606V642H607V642H608V642H609V643H610V642H611V642H612V642H613V642H614V641H615V641H616V639H617V637H618V637H619V635H620V632H621V636H622V635H623V636H624V634H625V636H626V633H627V633H628V633H629V636H630V634H631V634H632V637H633V636H634V635H635V635H636V636H637V635H638V636H639V636H640V637H641V638H642V637H643V638H644V638H645V636H646V636H647V636H648V636H649V637H650V637H651V637H652V637H653V639H654V636H655V638H656V636H657V635H658V635H659V635H660V635H661V633H662V635H663V634H664V634H665V635H666V637H667V636H668V635H669V635H670V636H671V636H672V637H673V637H674V635H675V637H676V635H677V635H678V635H679V630H680V634H681V634H682V634H683V634H684V635H685V637H686V637H687V635H688V637H689V636H690V638H691V638H692V636H693V638H694V636H695V637H696V637H697V637H698V638H699V638H700V636H701V637H702V636H703V636H704V636H705V636H706V636H707V636H708V636H709V637H710V636H711V635H712V636H713V635H714V635H715V637H716V635H717V636H718V634H719V631H720V633H721V632H722V623H723V618H724V607H725V613H726V613H727V618H728V614H729V618H730V614H731V620H732V613H733V613H734V621H735V619H736V615H737V622H738V619H739V608H740V619H741V620H742V618H743V622H744V621H745V624H746V622H747V622H748V626H749V628H750V627H751V626H752V627H753V630H754V633H755V633H756V636H757V640H758V638H759V639H760V640H761V640H762V641H763V640H764V640H765V640H766V640H767V641H768V640H769V641H770V642H771V641H772V641H773V640H774V640H775V640H776V640H777V640H778V641H779V640H780V641H781V642H782V641H783V641H784V639H785V641H786V641H787V641H788V642H789V642H790V641H791V642H792V641H793V641H794V640H795V641H796V641H797V642H798V641H799V640H800V641H801V641H802V641H803V640H804V641H805V640H806V640H807V640H808V640H809V640H810V641H811V640H812V641H813V641H814V641H815V642H816V641H817V640H818V638H819V638H820V634H821V636H822V636H823V636H824V638H825V636H826V638H827V637H828V637H829V637H830V637H831V637H832V637H833V636H834V637H835V637H836V639H837V637H838V638H839V638H840V638H841V639H842V639H843V640H844V639H845V639H846V639H847V638H848V638H849V639H850V639H851V639H852V639H853V638H854V637H855V638H856V640H857V638H858V639H859V639H860V639H861V639H862V639H863V640H864V641H865V642H866V642H867V639H868V637H869V637H870V637H871V636H872V636H873V636H874V636H875V638H876V637H877V637H878V638H879V638H880V638H881V638H882V638H883V638H884V638H885V639H886V637H887V636H888V634H889V636H890V636H891V636H892V636H893V635H894V636H895V636H896V637H897V635H898V636H899V635H900V635H901V636H902V637H903V635H904V635H905V635H906V636H907V637H908V634H909V635H910V635H911V634H912V636H913V632H914V634H915V634H916V632H917V632H918V635H919V635H920V635H921V635H922V633H923V633H924V633H925V635H926V636H927V634H928V636H929V634H930V636H931V636H932V637H933V636H934V636H935V635H936V635H937V635H938V634H939V633H940V635H941V634H942V633H943V635H944V634H945V635H946V634H947V634H948V636H949V635H950V636H951V635H952V636H953V636H954V635H955V637H956V635H957V636H958V634H959V635H960V635H961V634H962V634H963V634H964V634H965V634H966V633H967V632H968V633H969V633H970V633H971V633H972V635H973V634H974V634H975V635H976V634H977V633H978V633H979V635H980V634H981V634H982V634H983V635H984V637H985V636H986V637H987V636H988V636H989V635H990V635H991V633H992V633H993V633H994V632H995V633H996V633H997V632H998V633H999V633H1000V633H1001V636H1002V635H1003V636H1004V635H1005V637H1006V636H1007V637H1008V637H1009V635H1010V635H1011V635H1012V637H1013V636H1014V636H1015V638H1016V639H1017V640H1018V638H1019V640H1020V641H1021V638H1022V640H1023V640H1024V640H1025V641H1026V641H1027V640H1028V640H1029V641H1030V641H1031V641H1032V642H1033V642H1034V642H1035V642H1036V641H1037V641H1038V641H1039V642H1040V643H1041V642H1042V642H1043V642H1044V642H1045V642H1046V643H1047V642H1048V642H1049V642H1050V642H1051V642H1052V642H1053V643H1054V642H1055V642H1056V642H1057V641H1058V640H1059V643H1060V642H1061V642H1062V642H1063V642H1064V643H1065V642H1066V643H1067V642H1068V643H1069V643H1070V643H1071V643H1072V644H1073V644H1074V644H1075V644H1076V644H1077V644H1078V644H1079V644H1080V644H1081V644H1082V644H1083V644H1084V645H1085V644H1086V645H1087V640H1088V634H1089V638H1090V638H1091V639H1092V638H1093V638H1094V638H1095V638H1096V639H1097V640H1098V640H1099V640H1100V639H1101V640H1102V638H1103V640H1104V639H1105V639H1106V638H1107V640H1108V640H1109V640H1110V640H1111V639H1112V640H1113V640H1114V642H1115V642H1116V642H1117V643H1118V642H1119V638H1120V637H1121V634H1122V636H1123V635H1124V631H1125V635H1126V635H1127V637H1128V635H1129V634H1130V636H1131V634H1132V634H1133V633H1134V635H1135V636H1136V634H1137V635H1138V633H1139V633H1140V633H1141V636H1142V636H1143V636H1144V637H1145V636H1146V637H1147V637H1148V637H1149V636H1150V636H1151V638H1152V636H1153V636H1154V636H1155V636H1156V638H1157V639H1158V636H1159V635H1160V634H1161V634H1162V636H1163V658H1162V657H1161V658H1160V657H1159V655H1158V657H1157V656H1156V655H1155V657H1154V657H1153V655H1152V656H1151V657H1150V657H1149V657H1148V658H1147V656H1146V656H1145V657H1144V658H1143V657H1142V657H1141V657H1140V659H1139V658H1138V657H1137V656H1136V657H1135V657H1134V657H1133V657H1132V657H1131V655H1130V656H1129V657H1128V657H1127V658H1126V658H1125V658H1124V660H1123V660H1122V659H1121V657H1120V652H1119V651H1118V651H1117V650H1116V650H1115V652H1114V652H1113V652H1112V653H1111V653H1110V654H1109V654H1108V654H1107V653H1106V655H1105V655H1104V654H1103V656H1102V655H1101V654H1100V655H1099V657H1098V657H1097V657H1096V658H1095V658H1094V657H1093V657H1092V658H1091V658H1090V657H1089V664H1088V657H1087V648H1086V648H1085V648H1084V648H1083V648H1082V649H1081V649H1080V649H1079V649H1078V649H1077V649H1076V649H1075V649H1074V649H1073V649H1072V649H1071V650H1070V650H1069V650H1068V650H1067V650H1066V649H1065V650H1064V650H1063V650H1062V649H1061V650H1060V650H1059V650H1058V650H1057V650H1056V650H1055V650H1054V651H1053V650H1052V650H1051V650H1050V650H1049V650H1048V650H1047V650H1046V650H1045V651H1044V650H1043V651H1042V651H1041V651H1040V651H1039V651H1038V651H1037V651H1036V651H1035V651H1034V652H1033V652H1032V652H1031V653H1030V653H1029V653H1028V652H1027V653H1026V652H1025V652H1024V654H1023V655H1022V654H1021V654H1020V654H1019V654H1018V655H1017V654H1016V656H1015V657H1014V658H1013V658H1012V659H1011V657H1010V658H1009V659H1008V659H1007V659H1006V656H1005V658H1004V658H1003V656H1002V658H1001V657H1000V657H999V658H998V655H997V655H996V657H995V657H994V656H993V657H992V655H991V658H990V657H989V658H988V658H987V658H986V658H985V656H984V657H983V658H982V657H981V661H980V658H979V656H978V658H977V658H976V655H975V657H974V657H973V659H972V655H971V655H970V656H969V655H968V655H967V657H966V656H965V657H964V658H963V656H962V656H961V659H960V659H959V658H958V657H957V657H956V658H955V657H954V656H953V657H952V655H951V655H950V654H949V656H948V657H947V655H946V657H945V658H944V661H943V658H942V658H941V659H940V658H939V658H938V656H937V658H936V657H935V656H934V656H933V657H932V657H931V657H930V657H929V658H928V657H927V662H926V658H925V657H924V659H923V657H922V657H921V656H920V657H919V658H918V659H917V656H916V658H915V656H914V658H913V657H912V659H911V662H910V656H909V658H908V657H907V657H906V657H905V658H904V657H903V657H902V657H901V659H900V658H899V659H898V658H897V658H896V658H895V658H894V659H893V659H892V657H891V657H890V660H889V657H888V656H887V655H886V654H885V654H884V655H883V654H882V656H881V654H880V655H879V656H878V655H877V655H876V655H875V655H874V653H873V655H872V654H871V654H870V654H869V654H868V652H867V651H866V651H865V654H864V655H863V654H862V654H861V653H860V654H859V654H858V654H857V655H856V653H855V655H854V655H853V654H852V654H851V655H850V654H849V655H848V654H847V655H846V656H845V656H844V656H843V654H842V655H841V656H840V655H839V655H838V655H837V655H836V655H835V654H834V654H833V654H832V656H831V656H830V656H829V656H828V654H827V656H826V655H825V656H824V656H823V656H822V656H821V655H820V655H819V655H818V653H817V652H816V652H815V652H814V652H813V652H812V652H811V652H810V652H809V652H808V651H807V651H806V652H805V652H804V651H803V652H802V654H801V652H800V652H799V652H798V653H797V652H796V653H795V652H794V652H793V652H792V652H791V652H790V651H789V652H788V652H787V651H786V652H785V652H784V652H783V652H782V651H781V652H780V653H779V653H778V652H777V653H776V652H775V653H774V651H773V652H772V653H771V653H770V652H769V653H768V653H767V652H766V652H765V654H764V652H763V652H762V652H761V652H760V653H759V654H758V653H757V655H756V657H755V659H754V658H753V661H752V663H751V663H750V662H749V666H748V668H747V668H746V674H745V674H744V677H743V677H742V678H741V680H740V677H739V674H738V680H737V680H736V682H735V680H734V683H733V689H732V684H731V681H730V686H729V687H728V684H727V693H726V701H725V682H724V677H723V666H722V662H721V661H720V661H719V657H718V657H717V656H716V657H715V655H714V658H713V658H712V657H711V657H710V657H709V656H708V657H707V657H706V657H705V658H704V658H703V658H702V657H701V658H700V657H699V655H698V657H697V658H696V658H695V656H694V656H693V657H692V659H691V657H690V657H689V657H688V657H687V656H686V655H685V655H684V655H683V654H682V655H681V653H680V655H679V655H678V656H677V657H676V656H675V657H674V658H673V658H672V656H671V657H670V656H669V658H668V658H667V658H666V656H665V657H664V656H663V655H662V656H661V656H660V657H659V660H658V656H657V657H656V655H655V657H654V657H653V657H652V655H651V656H650V657H649V655H648V655H647V657H646V655H645V657H644V657H643V656H642V655H641V657H640V656H639V656H638V657H637V657H636V657H635V656H634V656H633V656H632V655H631V656H630V654H629V656H628V656H627V655H626V654H625V656H624V654H623V656H622V657H621V655H620V657H619V656H618V656H617V655H616V653H615V651H614V652H613V651H612V651H611V651H610V650H609V650H608V650H607V651H606V651H605V650H604V650H603V651H602V651H601V651H600V653H599V656H598V658H597V658H596V658H595V654H594V656H593V655H592V654H591V655H590V655H589V654H588V655H587V655H586V656H585V655H584V654H583V655H582V655H581V658H580V654H579V655H578V655H577V655H576V656H575V654H574V655H573V656H572V656H571V655H570V655H569V655H568V655H567V657H566V657H565V657H564V656H563V656H562V657H561V657H560V657H559V656H558V657H557V657H556V656H555V657H554V656H553V657H552V655H551V657H550V657H549V655H548V657H547V656H546V655H545V660H544V658H543V657H542V658H541V656H540V657H539V656H538V656H537V656H536V657H535V667H534V662H533V654H532V655H531V655H530V654H529V654H528V655H527V656H526V657H525V658H524V657H523V658H522V656H521V658H520V659H519V659H518V659H517V658H516V658H515V658H514V657H513V656H512V658H511V657H510V655H509V656H508V657H507V660H506V657H505V658H504V659H503V659H502V658H501V658H500V656H499V658H498V657H497V658H496V657H495V657H494V657H493V659H492V659H491V659H490V659H489V661H488V658H487V656H486V656H485V657H484V657H483V656H482V657H481V656H480V658H479V656H478V657H477V656H476V657H475V657H474V656H473V657H472V655H471V658H470V661H469V657H468V657H467V656H466V657H465V658H464V656H463V657H462V657H461V657H460V657H459V656H458V657H457V656H456V658H455V658H454V658H453V657H452V655H451V655H450V655H449V654H448V655H447V655H446V655H445V657H444V658H443V657H442V657H441V656H440V657H439V657H438V655H437V657H436V656H435V657H434V656H433V659H432V659H431V657H430V659H429V660H428V659H427V660H426V659H425V659H424V656H423V658H422V657H421V656H420V658H419V656H418V657H417V657H416V657H415V657H414V656H413V656H412V658H411V659H410V659H409V658H408V656H407V658H406V659H405V659H404V658H403V659H402V659H401V657H400V658H399V656H398V658H397V658H396V657H395V658H394V656H393V657H392V658H391V659H390V657H389V658H388V657H387V657H386V658H385V657H384V657H383V657H382V657H381V656H380V657H379V656H378V656H377V654H376V658H375V656H374V656H373V656H372V657H371V657H370V657H369V661H368V658H367V658H366V659H365V659H364V657H363V659H362V656H361V656H360V657H359V657H358V656H357V657H356V656H355V657H354V657H353V656H352V657H351V657H350V657H349V657H348V657H347V656H346V656H345V655H344V652H343V651H342V651H341V651H340V651H339V651H338V651H337V651H336V653H335V659H334V657H333V660H332V660H331V658H330V658H329V658H328V659H327V658H326V657H325V655H324V657H323V657H322V656H321V655H320V657H319V656H318V655H317V656H316V657H315V658H314V658H313V658H312V659H311V658H310V657H309V658H308V656H307V657H306V655H305V656H304V655H303V657H302V657H301V659H300V657H299V656H298V658H297V661H296V657H295V659H294V659H293V658H292V657H291V659H290V658H289V657H288V657H287V656H286V656H285V655H284V654H283V653H282V652H281V652H280V652H279V652H278V652H277V652H276V652H275V652H274V652H273V652H272V653H271V653H270V652H269V653H268V653H267V653H266V653H265V654H264V652H263V653H262V653H261V653H260V653H259V653H258V653H257V652H256V652H255V653H254V653H253V652H252V653H251V653H250V652H249V652H248V652H247V653H246V652H245V653H244V652H243V653H242V653H241V652H240V652H239V651H238V653H237V652H236V652H235V652H234V652H233V653H232V654H231V652H230V653H229V655H228V654H227V656H226V656H225V657H224V656H223V656H222V658H221V657H220V659H219V657H218V660H217V659H216V662H215V665H214V664H213V650H212V647H211V647H210V647H209V647H208V647H207V647H206V647H205V647H204V647H203V647H202V647H201V647H200V647H199V647H198V647H197V647H196V647H195V647H194Z" fill="#4252d2"/><path d="M194 646V646H195V646H196V646H197V646H198V646H199V646H200V646H201V646H202V646H203V646H204V646H205V646H206V646H207V646H208V646H209V646H210V646H211V646H212V645H213V640H214V639H215V639H216V640H217V641H218V641H219V641H220V641H221V641H222V641H223V641H224V641H225V642H226V642H227V642H228V642H229V642H230V642H231V642H232V643H233V643H234V644H235V644H236V644H237V644H238V644H239V644H240V643H241V643H242V644H243V644H244V644H245V644H246V644H247V644H248V644H249V644H250V644H251V643H252V643H253V642H254V642H255V642H256V642H257V642H258V642H259V642H260V642H261V642H262V643H263V642H264V642H265V642H266V642H267V642H268V642H269V642H270V642H271V642H272V642H273V642H274V643H275V642H276V643H277V643H278V643H279V642H280V642H281V643H282V642H283V641H284V641H285V641H286V641H287V641H288V641H289V641H290V641H291V641H292V641H293V640H294V640H295V641H296V641H297V641H298V641H299V640H300V641H301V641H302V641H303V641H304V641H305V641H306V641H307V641H308V640H309V640H310V640H311V640H312V640H313V640H314V640H315V640H316V641H317V640H318V641H319V640H320V640H321V640H322V640H323V640H324V640H325V641H326V641H327V641H328V641H329V641H330V641H331V641H332V641H333V640H334V641H335V643H336V643H337V644H338V644H339V644H340V644H341V644H342V644H343V643H344V641H345V640H346V640H347V640H348V639H349V640H350V640H351V640H352V640H353V640H354V641H355V641H356V640H357V640H358V640H359V641H360V641H361V641H362V640H363V640H364V640H365V641H366V641H367V640H368V640H369V640H370V641H371V640H372V640H373V641H374V641H375V641H376V641H377V641H378V641H379V641H380V641H381V641H382V641H383V641H384V641H385V641H386V641H387V641H388V640H389V640H390V640H391V640H392V640H393V640H394V641H395V641H396V641H397V640H398V641H399V641H400V641H401V641H402V641H403V641H404V641H405V641H406V641H407V641H408V641H409V641H410V641H411V641H412V641H413V641H414V641H415V641H416V641H417V640H418V641H419V641H420V641H421V641H422V641H423V641H424V641H425V641H426V641H427V641H428V641H429V641H430V641H431V641H432V641H433V641H434V641H435V640H436V640H437V640H438V640H439V641H440V641H441V641H442V641H443V641H444V641H445V641H446V640H447V640H448V641H449V641H450V641H451V640H452V640H453V641H454V640H455V640H456V640H457V640H458V640H459V641H460V640H461V640H462V640H463V640H464V640H465V640H466V641H467V640H468V641H469V641H470V640H471V641H472V641H473V640H474V640H475V640H476V640H477V641H478V641H479V640H480V640H481V640H482V640H483V641H484V640H485V640H486V641H487V640H488V640H489V641H490V640H491V641H492V640H493V640H494V640H495V641H496V641H497V641H498V641H499V641H500V641H501V641H502V641H503V640H504V641H505V640H506V640H507V641H508V640H509V640H510V640H511V640H512V640H513V641H514V641H515V640H516V640H517V640H518V640H519V639H520V640H521V640H522V640H523V640H524V641H525V641H526V641H527V642H528V641H529V642H530V642H531V642H532V642H533V638H534V638H535V640H536V640H537V640H538V640H539V640H540V640H541V640H542V640H543V640H544V641H545V640H546V640H547V640H548V641H549V640H550V640H551V641H552V641H553V641H554V641H555V641H556V641H557V641H558V641H559V641H560V641H561V641H562V641H563V641H564V641H565V641H566V641H567V641H568V641H569V641H570V641H571V641H572V641H573V641H574V641H575V641H576V641H577V641H578V641H579V641H580V641H581V641H582V642H583V641H584V641H585V641H586V641H587V641H588V641H589V641H590V641H591V640H592V641H593V641H594V641H595V640H596V641H597V641H598V642H599V643H600V644H601V644H602V644H603V644H604V644H605V644H606V644H607V644H608V644H609V644H610V644H611V644H612V644H613V644H614V644H615V643H616V642H617V641H618V641H619V641H620V641H621V641H622V641H623V641H624V641H625V641H626V640H627V640H628V641H629V640H630V641H631V640H632V640H633V641H634V640H635V640H636V640H637V641H638V641H639V641H640V641H641V641H642V641H643V641H644V642H645V641H646V641H647V642H648V641H649V641H650V642H651V641H652V641H653V641H654V641H655V641H656V641H657V641H658V641H659V641H660V641H661V641H662V641H663V641H664V641H665V641H666V640H667V640H668V641H669V641H670V641H671V641H672V641H673V641H674V641H675V641H676V641H677V641H678V641H679V640H680V640H681V640H682V640H683V640H684V641H685V641H686V641H687V641H688V641H689V641H690V641H691V641H692V641H693V641H694V641H695V642H696V642H697V641H698V641H699V641H700V641H701V641H702V641H703V641H704V641H705V641H706V641H707V641H708V640H709V641H710V640H711V641H712V641H713V640H714V641H715V641H716V641H717V641H718V640H719V639H720V640H721V639H722V636H723V632H724V632H725V633H726V630H727V632H728V632H729V632H730V632H731V632H732V633H733V633H734V632H735V634H736V633H737V633H738V633H739V633H740V633H741V635H742V634H743V636H744V635H745V635H746V636H747V636H748V636H749V637H750V637H751V638H752V637H753V638H754V639H755V640H756V642H757V643H758V643H759V643H760V643H761V643H762V643H763V643H764V643H765V643H766V643H767V643H768V643H769V643H770V643H771V643H772V643H773V643H774V643H775V643H776V643H777V643H778V643H779V643H780V643H781V643H782V643H783V643H784V644H785V643H786V643H787V644H788V643H789V643H790V643H791V643H792V643H793V643H794V643H795V643H796V643H797V643H798V643H799V644H800V643H801V643H802V643H803V643H804V643H805V643H806V643H807V643H808V643H809V643H810V643H811V643H812V643H813V643H814V643H815V643H816V643H817V643H818V642H819V641H820V642H821V641H822V641H823V641H824V642H825V641H826V642H827V641H828V641H829V641H830V641H831V642H832V642H833V641H834V642H835V642H836V642H837V642H838V642H839V642H840V642H841V642H842V642H843V642H844V642H845V642H846V642H847V642H848V642H849V641H850V642H851V642H852V642H853V642H854V642H855V642H856V642H857V642H858V643H859V642H860V642H861V643H862V642H863V643H864V643H865V644H866V644H867V642H868V641H869V642H870V641H871V641H872V642H873V642H874V641H875V642H876V641H877V642H878V642H879V642H880V642H881V642H882V642H883V642H884V642H885V641H886V641H887V641H888V641H889V641H890V641H891V640H892V641H893V641H894V641H895V641H896V641H897V641H898V641H899V641H900V640H901V641H902V641H903V640H904V641H905V641H906V641H907V641H908V641H909V640H910V641H911V640H912V640H913V640H914V640H915V640H916V640H917V640H918V640H919V640H920V640H921V640H922V640H923V640H924V640H925V640H926V640H927V640H928V640H929V640H930V641H931V641H932V641H933V641H934V640H935V640H936V640H937V640H938V640H939V640H940V640H941V640H942V640H943V640H944V640H945V641H946V640H947V641H948V640H949V641H950V640H951V641H952V641H953V641H954V640H955V641H956V641H957V640H958V640H959V641H960V641H961V641H962V641H963V640H964V641H965V640H966V640H967V640H968V640H969V640H970V640H971V640H972V640H973V640H974V640H975V640H976V640H977V640H978V640H979V640H980V641H981V640H982V641H983V641H984V641H985V641H986V641H987V641H988V641H989V641H990V640H991V640H992V640H993V640H994V640H995V640H996V640H997V640H998V640H999V641H1000V641H1001V640H1002V641H1003V641H1004V641H1005V641H1006V641H1007V641H1008V641H1009V641H1010V641H1011V640H1012V641H1013V640H1014V640H1015V641H1016V642H1017V643H1018V643H1019V643H1020V642H1021V643H1022V643H1023V643H1024V643H1025V643H1026V643H1027V643H1028V643H1029V643H1030V643H1031V644H1032V644H1033V644H1034V644H1035V644H1036V644H1037V644H1038V644H1039V644H1040V644H1041V644H1042V644H1043V644H1044V644H1045V644H1046V644H1047V644H1048V644H1049V644H1050V644H1051V644H1052V644H1053V644H1054V644H1055V644H1056V644H1057V644H1058V644H1059V644H1060V644H1061V644H1062V644H1063V644H1064V644H1065V644H1066V644H1067V644H1068V644H1069V645H1070V645H1071V645H1072V645H1073V645H1074V645H1075V645H1076V645H1077V645H1078V645H1079V645H1080V645H1081V645H1082V645H1083V645H1084V645H1085V645H1086V645H1087V642H1088V640H1089V641H1090V642H1091V642H1092V642H1093V642H1094V642H1095V642H1096V642H1097V642H1098V642H1099V643H1100V643H1101V643H1102V643H1103V643H1104V643H1105V643H1106V643H1107V643H1108V643H1109V643H1110V643H1111V643H1112V643H1113V643H1114V644H1115V644H1116V644H1117V644H1118V644H1119V643H1120V641H1121V640H1122V640H1123V640H1124V640H1125V640H1126V641H1127V640H1128V640H1129V640H1130V641H1131V640H1132V641H1133V641H1134V640H1135V640H1136V640H1137V640H1138V641H1139V640H1140V640H1141V641H1142V640H1143V641H1144V640H1145V641H1146V641H1147V641H1148V641H1149V641H1150V641H1151V641H1152V641H1153V641H1154V641H1155V641H1156V641H1157V641H1158V641H1159V641H1160V641H1161V641H1162V641H1163V652H1162V652H1161V652H1160V652H1159V652H1158V652H1157V652H1156V652H1155V652H1154V652H1153V652H1152V652H1151V652H1150V652H1149V652H1148V652H1147V652H1146V652H1145V652H1144V652H1143V652H1142V652H1141V652H1140V653H1139V653H1138V652H1137V652H1136V652H1135V652H1134V652H1133V652H1132V652H1131V652H1130V652H1129V652H1128V652H1127V652H1126V652H1125V653H1124V653H1123V653H1122V652H1121V652H1120V650H1119V649H1118V649H1117V649H1116V649H1115V649H1114V650H1113V649H1112V650H1111V650H1110V650H1109V650H1108V650H1107V650H1106V651H1105V651H1104V651H1103V651H1102V652H1101V652H1100V652H1099V652H1098V652H1097V652H1096V652H1095V652H1094V652H1093V652H1092V653H1091V652H1090V653H1089V654H1088V652H1087V648H1086V648H1085V648H1084V648H1083V648H1082V648H1081V648H1080V648H1079V648H1078V648H1077V648H1076V648H1075V648H1074V648H1073V648H1072V648H1071V648H1070V648H1069V648H1068V648H1067V649H1066V648H1065V649H1064V649H1063V649H1062V648H1061V649H1060V649H1059V649H1058V649H1057V649H1056V649H1055V649H1054V649H1053V649H1052V649H1051V649H1050V649H1049V649H1048V649H1047V649H1046V649H1045V649H1044V649H1043V649H1042V649H1041V649H1040V649H1039V649H1038V649H1037V649H1036V649H1035V649H1034V650H1033V650H1032V650H1031V650H1030V649H1029V650H1028V650H1027V650H1026V650H1025V650H1024V650H1023V651H1022V651H1021V651H1020V651H1019V651H1018V651H1017V651H1016V652H1015V652H1014V652H1013V652H1012V652H1011V652H1010V653H1009V652H1008V652H1007V653H1006V652H1005V652H1004V652H1003V652H1002V652H1001V652H1000V652H999V652H998V652H997V652H996V651H995V652H994V652H993V652H992V652H991V652H990V652H989V652H988V652H987V652H986V652H985V653H984V652H983V652H982V652H981V652H980V652H979V652H978V652H977V653H976V652H975V652H974V652H973V652H972V652H971V652H970V651H969V652H968V651H967V652H966V652H965V652H964V652H963V652H962V652H961V652H960V652H959V652H958V652H957V652H956V652H955V652H954V652H953V652H952V652H951V652H950V652H949V652H948V652H947V652H946V652H945V652H944V652H943V652H942V652H941V653H940V652H939V652H938V652H937V653H936V652H935V652H934V652H933V652H932V652H931V652H930V652H929V652H928V652H927V653H926V652H925V652H924V653H923V652H922V652H921V652H920V652H919V652H918V652H917V653H916V652H915V653H914V652H913V652H912V653H911V652H910V652H909V652H908V652H907V652H906V652H905V652H904V652H903V652H902V653H901V652H900V652H899V652H898V652H897V653H896V652H895V652H894V653H893V653H892V653H891V652H890V653H889V652H888V652H887V651H886V651H885V651H884V651H883V651H882V651H881V651H880V651H879V651H878V651H877V651H876V651H875V651H874V651H873V651H872V651H871V650H870V651H869V651H868V650H867V649H866V649H865V650H864V651H863V650H862V651H861V651H860V651H859V651H858V651H857V651H856V651H855V651H854V651H853V651H852V651H851V651H850V651H849V651H848V651H847V651H846V651H845V651H844V651H843V651H842V651H841V651H840V651H839V651H838V651H837V651H836V651H835V651H834V651H833V651H832V651H831V651H830V651H829V651H828V651H827V651H826V651H825V652H824V651H823V651H822V652H821V651H820V651H819V651H818V650H817V649H816V650H815V649H814V650H813V649H812V650H811V650H810V650H809V650H808V649H807V650H806V650H805V650H804V649H803V649H802V650H801V650H800V650H799V650H798V650H797V650H796V650H795V649H794V650H793V649H792V649H791V649H790V649H789V649H788V649H787V649H786V649H785V650H784V650H783V649H782V650H781V650H780V650H779V650H778V650H777V649H776V649H775V649H774V650H773V650H772V650H771V650H770V650H769V650H768V650H767V649H766V650H765V650H764V650H763V650H762V649H761V650H760V650H759V650H758V650H757V651H756V652H755V652H754V653H753V654H752V654H751V654H750V655H749V656H748V656H747V656H746V657H745V657H744V660H743V659H742V660H741V660H740V660H739V660H738V660H737V662H736V661H735V662H734V662H733V662H732V661H731V662H730V661H729V662H728V662H727V665H726V666H725V664H724V661H723V657H722V654H721V654H720V653H719V652H718V652H717V652H716V652H715V652H714V652H713V652H712V652H711V652H710V652H709V652H708V652H707V652H706V652H705V652H704V652H703V652H702V652H701V652H700V652H699V652H698V652H697V652H696V652H695V652H694V652H693V652H692V652H691V652H690V652H689V652H688V652H687V651H686V651H685V651H684V651H683V652H682V651H681V651H680V652H679V651H678V651H677V652H676V652H675V652H674V652H673V652H672V652H671V652H670V652H669V652H668V652H667V652H666V652H665V652H664V651H663V651H662V652H661V652H660V652H659V652H658V652H657V652H656V652H655V652H654V652H653V652H652V652H651V652H650V652H649V652H648V651H647V652H646V651H645V652H644V652H643V651H642V651H641V652H640V651H639V652H638V652H637V652H636V652H635V652H634V652H633V651H632V652H631V652H630V652H629V651H628V651H627V651H626V651H625V651H624V652H623V651H622V651H621V652H620V652H619V652H618V652H617V651H616V650H615V649H614V649H613V649H612V649H611V649H610V649H609V649H608V649H607V649H606V649H605V649H604V649H603V649H602V649H601V649H600V650H599V651H598V652H597V652H596V652H595V652H594V652H593V651H592V651H591V651H590V651H589V651H588V651H587V651H586V652H585V651H584V651H583V651H582V651H581V651H580V651H579V651H578V651H577V651H576V652H575V651H574V651H573V651H572V651H571V652H570V651H569V652H568V652H567V652H566V651H565V651H564V651H563V652H562V651H561V652H560V651H559V652H558V652H557V652H556V652H555V652H554V652H553V652H552V651H551V652H550V652H549V651H548V652H547V652H546V652H545V652H544V652H543V652H542V652H541V652H540V652H539V652H538V652H537V652H536V652H535V654H534V653H533V650H532V650H531V651H530V651H529V651H528V651H527V651H526V652H525V652H524V652H523V652H522V652H521V652H520V652H519V652H518V652H517V653H516V653H515V652H514V652H513V652H512V652H511V652H510V652H509V653H508V652H507V652H506V653H505V652H504V653H503V652H502V652H501V653H500V653H499V653H498V653H497V652H496V652H495V652H494V652H493V652H492V653H491V652H490V652H489V652H488V652H487V652H486V652H485V652H484V652H483V652H482V652H481V652H480V652H479V652H478V652H477V652H476V652H475V652H474V652H473V652H472V652H471V652H470V652H469V652H468V652H467V652H466V652H465V652H464V652H463V652H462V652H461V652H460V652H459V652H458V652H457V652H456V653H455V652H454V652H453V652H452V652H451V652H450V652H449V652H448V652H447V652H446V652H445V652H444V652H443V652H442V652H441V652H440V652H439V652H438V652H437V652H436V652H435V652H434V652H433V652H432V653H431V653H430V653H429V653H428V653H427V652H426V653H425V653H424V653H423V653H422V652H421V652H420V652H419V652H418V652H417V652H416V652H415V652H414V652H413V652H412V652H411V653H410V652H409V653H408V653H407V653H406V653H405V652H404V652H403V653H402V652H401V652H400V652H399V653H398V652H397V652H396V652H395V652H394V652H393V652H392V652H391V652H390V652H389V652H388V652H387V652H386V652H385V652H384V652H383V652H382V652H381V652H380V652H379V652H378V652H377V652H376V652H375V651H374V652H373V652H372V652H371V652H370V652H369V653H368V652H367V652H366V653H365V652H364V653H363V652H362V652H361V652H360V652H359V652H358V652H357V651H356V652H355V652H354V652H353V652H352V652H351V652H350V652H349V652H348V652H347V652H346V652H345V651H344V650H343V649H342V649H341V649H340V649H339V649H338V649H337V649H336V650H335V651H334V653H333V653H332V653H331V652H330V653H329V653H328V653H327V652H326V652H325V653H324V652H323V652H322V652H321V652H320V652H319V652H318V652H317V652H316V653H315V652H314V652H313V652H312V653H311V652H310V652H309V652H308V652H307V652H306V652H305V652H304V652H303V652H302V652H301V652H300V652H299V652H298V652H297V652H296V653H295V653H294V652H293V652H292V653H291V653H290V652H289V652H288V652H287V652H286V652H285V652H284V651H283V650H282V650H281V649H280V649H279V650H278V650H277V650H276V650H275V650H274V650H273V650H272V650H271V650H270V650H269V650H268V650H267V650H266V650H265V650H264V650H263V650H262V650H261V650H260V650H259V650H258V650H257V650H256V650H255V650H254V650H253V650H252V650H251V649H250V650H249V650H248V650H247V650H246V650H245V650H244V649H243V649H242V650H241V649H240V650H239V650H238V650H237V650H236V650H235V649H234V650H233V650H232V650H231V651H230V650H229V651H228V651H227V651H226V652H225V652H224V652H223V653H222V653H221V653H220V653H219V653H218V653H217V655H216V655H215V655H214V654H213V649H212V647H211V647H210V647H209V647H208V647H207V647H206V647H205V647H204V647H203V647H202V647H201V647H200V647H199V647H198V647H197V647H196V647H195V647H194Z" fill="#7482e2"/></svg></div>
<div style="left:0;top:0;width:0;height:0"><svg width="1958" height="1248" style="left:0;top:0" shape-rendering="crispEdges"><path d="M194 796V796H195V796H196V796H197V796H198V796H199V796H200V796H201V796H202V796H203V796H204V796H205V796H206V796H207V796H208V796H209V796H210V796H211V796H212V793H213V783H214V782H215V783H216V785H217V785H218V786H219V786H220V786H221V786H222V787H223V787H224V788H225V788H226V788H227V789H228V789H229V789H230V790H231V790H232V790H233V792H234V791H235V792H236V791H237V791H238V791H239V791H240V792H241V792H242V791H243V792H244V791H245V792H246V792H247V792H248V792H249V792H250V793H251V792H252V789H253V789H254V788H255V788H256V789H257V789H258V789H259V789H260V789H261V789H262V790H263V789H264V789H265V789H266V788H267V790H268V789H269V790H270V790H271V788H272V789H273V788H274V789H275V788H276V789H277V789H278V791H279V789H280V789H281V789H282V789H283V788H284V787H285V787H286V788H287V787H288V786H289V788H290V787H291V787H292V788H293V786H294V787H295V785H296V787H297V785H298V787H299V788H300V787H301V787H302V787H303V787H304V788H305V786H306V784H307V785H308V786H309V784H310V786H311V785H312V784H313V783H314V785H315V783H316V783H317V784H318V784H319V786H320V784H321V783H322V784H323V785H324V785H325V785H326V787H327V788H328V787H329V787H330V788H331V784H332V785H333V785H334V786H335V790H336V792H337V792H338V791H339V792H340V791H341V792H342V791H343V789H344V787H345V784H346V784H347V783H348V785H349V786H350V784H351V784H352V785H353V781H354V784H355V784H356V784H357V784H358V786H359V786H360V785H361V784H362V784H363V785H364V784H365V784H366V784H367V785H368V785H369V785H370V785H371V785H372V785H373V785H374V785H375V788H376V787H377V788H378V788H379V786H380V785H381V786H382V786H383V786H384V787H385V787H386V787H387V786H388V787H389V782H390V785H391V786H392V786H393V787H394V784H395V784H396V787H397V787H398V786H399V786H400V786H401V788H402V788H403V788H404V786H405V786H406V788H407V787H408V785H409V787H410V784H411V786H412V787H413V786H414V787H415V785H416V785H417V786H418V786H419V786H420V787H421V786H422V786H423V788H424V788H425V788H426V786H427V786H428V788H429V788H430V787H431V785H432V785H433V786H434V786H435V786H436V785H437V786H438V784H439V786H440V784H441V784H442V784H443V786H444V785H445V785H446V787H447V786H448V781H449V785H450V784H451V786H452V786H453V785H454V785H455V783H456V783H457V786H458V783H459V783H460V784H461V785H462V786H463V786H464V785H465V787H466V785H467V786H468V785H469V784H470V785H471V784H472V784H473V785H474V785H475V786H476V785H477V786H478V786H479V787H480V785H481V785H482V784H483V786H484V786H485V785H486V785H487V784H488V784H489V784H490V784H491V786H492V786H493V785H494V785H495V785H496V785H497V784H498V785H499V786H500V785H501V786H502V786H503V787H504V786H505V786H506V785H507V785H508V786H509V787H510V785H511V787H512V785H513V784H514V784H515V784H516V784H517V781H518V782H519V784H520V784H521V784H522V784H523V787H524V784H525V787H526V786H527V787H528V787H529V787H530V789H531V790H532V788H533V780H534V781H535V784H536V784H537V785H538V785H539V783H540V786H541V784H542V784H543V784H544V782H545V784H546V784H547V784H548V786H549V785H550V782H551V786H552V785H553V786H554V788H555V786H556V786H557V787H558V786H559V786H560V786H561V786H562V787H563V785H564V788H565V787H566V787H567V786H568V788H569V787H570V787H571V786H572V786H573V785H574V788H575V786H576V787H577V786H578V786H579V787H580V787H581V787H582V787H583V787H584V786H585V786H586V787H587V786H588V786H589V787H590V786H591V785H592V786H593V787H594V785H595V787H596V785H597V785H598V788H599V791H600V792H601V792H602V793H603V792H604V792H605V792H606V793H607V792H608V792H609V793H610V792H611V792H612V792H613V792H614V791H615V791H616V789H617V787H618V787H619V786H620V783H621V787H622V785H623V787H624V784H625V786H626V784H627V783H628V783H629V786H630V784H631V784H632V787H633V786H634V785H635V786H636V786H637V785H638V786H639V787H640V787H641V788H642V788H643V788H644V789H645V787H646V787H647V786H648V786H649V787H650V788H651V788H652V787H653V789H654V787H655V788H656V786H657V786H658V786H659V786H660V785H661V784H662V785H663V785H664V785H665V785H666V787H667V786H668V786H669V785H670V786H671V787H672V788H673V787H674V786H675V787H676V785H677V786H678V785H679V781H680V784H681V784H682V785H683V785H684V785H685V787H686V787H687V786H688V787H689V787H690V788H691V788H692V786H693V788H694V786H695V787H696V787H697V787H698V788H699V788H700V787H701V787H702V786H703V787H704V786H705V787H706V786H707V786H708V787H709V788H710V786H711V786H712V786H713V785H714V785H715V787H716V785H717V786H718V784H719V782H720V783H721V783H722V774H723V769H724V759H725V765H726V764H727V769H728V766H729V769H730V765H731V771H732V764H733V765H734V772H735V770H736V766H737V773H738V770H739V760H740V770H741V771H742V769H743V773H744V772H745V775H746V773H747V773H748V777H749V779H750V778H751V776H752V778H753V781H754V783H755V784H756V786H757V790H758V789H759V789H760V790H761V790H762V791H763V791H764V790H765V791H766V790H767V791H768V791H769V791H770V792H771V791H772V792H773V791H774V791H775V791H776V790H777V791H778V791H779V790H780V791H781V792H782V791H783V791H784V790H785V792H786V791H787V791H788V792H789V792H790V792H791V792H792V791H793V791H794V791H795V791H796V791H797V792H798V791H799V791H800V791H801V791H802V792H803V790H804V791H805V790H806V790H807V790H808V790H809V790H810V791H811V791H812V791H813V791H814V791H815V792H816V791H817V790H818V788H819V789H820V784H821V786H822V787H823V787H824V788H825V786H826V788H827V788H828V788H829V788H830V787H831V787H832V787H833V787H834V787H835V787H836V789H837V788H838V788H839V788H840V788H841V790H842V789H843V790H844V789H845V789H846V789H847V788H848V788H849V789H850V790H851V789H852V790H853V788H854V788H855V788H856V790H857V789H858V789H859V789H860V790H861V790H862V789H863V791H864V791H865V792H866V792H867V789H868V787H869V787H870V787H871V786H872V786H873V787H874V787H875V788H876V787H877V787H878V789H879V789H880V788H881V789H882V788H883V788H884V788H885V789H886V788H887V786H888V784H889V786H890V786H891V786H892V786H893V785H894V786H895V786H896V787H897V786H898V787H899V785H900V786H901V786H902V788H903V785H904V785H905V785H906V786H907V788H908V785H909V785H910V785H911V785H912V787H913V783H914V784H915V784H916V783H917V783H918V785H919V785H920V786H921V786H922V784H923V784H924V784H925V786H926V786H927V784H928V786H929V785H930V787H931V786H932V787H933V786H934V786H935V785H936V785H937V786H938V784H939V784H940V785H941V785H942V784H943V785H944V784H945V785H946V785H947V785H948V786H949V785H950V786H951V785H952V786H953V787H954V786H955V787H956V786H957V786H958V785H959V786H960V785H961V785H962V785H963V785H964V784H965V785H966V783H967V783H968V783H969V784H970V783H971V783H972V786H973V785H974V784H975V786H976V785H977V784H978V784H979V786H980V784H981V784H982V785H983V785H984V787H985V786H986V787H987V786H988V786H989V785H990V785H991V784H992V784H993V783H994V783H995V783H996V784H997V783H998V783H999V783H1000V784H1001V786H1002V785H1003V787H1004V786H1005V787H1006V786H1007V787H1008V787H1009V785H1010V785H1011V785H1012V787H1013V786H1014V786H1015V788H1016V789H1017V790H1018V788H1019V790H1020V791H1021V788H1022V790H1023V790H1024V790H1025V791H1026V791H1027V790H1028V791H1029V791H1030V791H1031V792H1032V792H1033V792H1034V792H1035V792H1036V791H1037V791H1038V792H1039V792H1040V793H1041V792H1042V792H1043V793H1044V792H1045V792H1046V793H1047V792H1048V792H1049V792H1050V793H1051V792H1052V792H1053V793H1054V792H1055V792H1056V792H1057V792H1058V791H1059V793H1060V792H1061V792H1062V792H1063V792H1064V793H1065V793H1066V793H1067V793H1068V793H1069V793H1070V793H1071V794H1072V794H1073V794H1074V794H1075V794H1076V794H1077V794H1078V794H1079V794H1080V794H1081V795H1082V795H1083V795H1084V795H1085V794H1086V795H1087V791H1088V785H1089V788H1090V788H1091V789H1092V788H1093V788H1094V789H1095V789H1096V789H1097V790H1098V790H1099V790H1100V789H1101V790H1102V789H1103V790H1104V789H1105V790H1106V788H1107V790H1108V790H1109V790H1110V790H1111V790H1112V790H1113V790H1114V792H1115V792H1116V793H1117V793H1118V792H1119V789H1120V788H1121V784H1122V787H1123V786H1124V781H1125V786H1126V786H1127V787H1128V785H1129V785H1130V787H1131V784H1132V785H1133V784H1134V785H1135V787H1136V785H1137V785H1138V784H1139V784H1140V784H1141V787H1142V787H1143V787H1144V787H1145V786H1146V787H1147V788H1148V787H1149V787H1150V786H1151V788H1152V786H1153V786H1154V786H1155V786H1156V788H1157V789H1158V787H1159V785H1160V785H1161V785H1162V787H1163V808H1162V807H1161V807H1160V807H1159V805H1158V807H1157V806H1156V805H1155V807H1154V807H1153V805H1152V806H1151V806H1150V806H1149V807H1148V808H1147V806H1146V806H1145V807H1144V808H1143V807H1142V807H1141V806H1140V809H1139V808H1138V807H1137V806H1136V806H1135V807H1134V807H1133V806H1132V807H1131V805H1130V805H1129V807H1128V807H1127V807H1126V808H1125V807H1124V809H1123V809H1122V808H1121V806H1120V802H1119V801H1118V801H1117V800H1116V800H1115V801H1114V802H1113V802H1112V803H1111V803H1110V804H1109V804H1108V804H1107V802H1106V804H1105V805H1104V804H1103V805H1102V805H1101V804H1100V805H1099V807H1098V807H1097V806H1096V807H1095V807H1094V807H1093V807H1092V807H1091V807H1090V807H1089V813H1088V806H1087V798H1086V798H1085V798H1084V798H1083V798H1082V798H1081V799H1080V798H1079V799H1078V799H1077V799H1076V799H1075V799H1074V799H1073V799H1072V799H1071V799H1070V800H1069V800H1068V799H1067V800H1066V799H1065V800H1064V800H1063V800H1062V799H1061V800H1060V800H1059V800H1058V800H1057V800H1056V800H1055V800H1054V801H1053V800H1052V800H1051V800H1050V800H1049V800H1048V800H1047V800H1046V800H1045V801H1044V800H1043V801H1042V801H1041V801H1040V801H1039V801H1038V801H1037V801H1036V801H1035V801H1034V802H1033V802H1032V802H1031V802H1030V802H1029V803H1028V802H1027V803H1026V802H1025V802H1024V804H1023V804H1022V803H1021V804H1020V804H1019V804H1018V805H1017V804H1016V806H1015V806H1014V808H1013V808H1012V808H1011V806H1010V808H1009V808H1008V808H1007V808H1006V805H1005V807H1004V807H1003V806H1002V807H1001V806H1000V806H999V807H998V805H997V805H996V806H995V806H994V806H993V806H992V805H991V807H990V807H989V808H988V807H987V807H986V808H985V806H984V807H983V808H982V807H981V810H980V808H979V806H978V807H977V807H976V805H975V807H974V806H973V808H972V805H971V805H970V805H969V804H968V805H967V806H966V806H965V807H964V807H963V806H962V806H961V808H960V808H959V808H958V807H957V807H956V807H955V807H954V806H953V806H952V805H951V805H950V804H949V805H948V806H947V805H946V807H945V807H944V811H943V808H942V808H941V808H940V807H939V807H938V806H937V808H936V807H935V805H934V806H933V806H932V807H931V807H930V807H929V808H928V807H927V811H926V808H925V807H924V809H923V807H922V807H921V806H920V806H919V808H918V809H917V806H916V808H915V806H914V807H913V806H912V808H911V811H910V805H909V807H908V806H907V807H906V807H905V807H904V807H903V807H902V806H901V808H900V808H899V809H898V807H897V808H896V807H895V808H894V808H893V809H892V806H891V807H890V809H889V807H888V806H887V805H886V803H885V804H884V805H883V804H882V806H881V804H880V804H879V806H878V805H877V804H876V805H875V804H874V803H873V804H872V804H871V804H870V804H869V804H868V802H867V801H866V801H865V804H864V805H863V804H862V803H861V802H860V804H859V803H858V804H857V804H856V803H855V804H854V805H853V804H852V804H851V805H850V804H849V805H848V804H847V805H846V806H845V806H844V806H843V804H842V805H841V805H840V804H839V805H838V805H837V805H836V805H835V804H834V804H833V804H832V805H831V806H830V806H829V806H828V804H827V806H826V805H825V805H824V805H823V806H822V806H821V805H820V805H819V804H818V802H817V802H816V801H815V802H814V802H813V802H812V802H811V802H810V802H809V802H808V801H807V801H806V802H805V802H804V801H803V802H802V803H801V802H800V802H799V802H798V802H797V802H796V802H795V802H794V802H793V802H792V802H791V801H790V801H789V802H788V801H787V801H786V801H785V802H784V801H783V802H782V801H781V802H780V802H779V802H778V802H777V802H776V802H775V802H774V801H773V802H772V803H771V802H770V801H769V802H768V803H767V802H766V801H765V804H764V802H763V802H762V802H761V802H760V803H759V803H758V803H757V805H756V806H755V808H754V807H753V811H752V812H751V813H750V812H749V815H748V817H747V817H746V823H745V823H744V825H743V826H742V827H741V829H740V825H739V823H738V829H737V828H736V831H735V828H734V832H733V838H732V833H731V830H730V835H729V836H728V832H727V841H726V849H725V830H724V826H723V816H722V811H721V810H720V810H719V807H718V807H717V805H716V807H715V805H714V808H713V807H712V807H711V806H710V806H709V806H708V807H707V806H706V807H705V808H704V807H703V807H702V807H701V807H700V807H699V805H698V807H697V807H696V807H695V805H694V805H693V806H692V809H691V806H690V806H689V806H688V807H687V806H686V805H685V805H684V804H683V803H682V805H681V803H680V805H679V805H678V806H677V807H676V805H675V806H674V807H673V807H672V806H671V807H670V806H669V808H668V807H667V807H666V805H665V807H664V806H663V805H662V805H661V806H660V806H659V809H658V805H657V807H656V805H655V806H654V807H653V806H652V805H651V806H650V806H649V805H648V804H647V806H646V805H645V807H644V806H643V806H642V805H641V807H640V805H639V805H638V807H637V806H636V807H635V805H634V805H633V805H632V804H631V806H630V804H629V805H628V806H627V805H626V804H625V805H624V804H623V806H622V806H621V805H620V806H619V806H618V806H617V805H616V802H615V800H614V802H613V800H612V801H611V800H610V800H609V800H608V800H607V800H606V800H605V800H604V800H603V800H602V801H601V801H600V803H599V806H598V808H597V808H596V807H595V804H594V806H593V805H592V804H591V805H590V805H589V804H588V805H587V804H586V805H585V804H584V804H583V805H582V805H581V807H580V804H579V805H578V805H577V805H576V805H575V804H574V805H573V806H572V806H571V805H570V804H569V805H568V805H567V806H566V806H565V806H564V805H563V806H562V806H561V807H560V807H559V806H558V806H557V806H556V806H555V806H554V805H553V807H552V805H551V807H550V807H549V805H548V807H547V806H546V805H545V810H544V807H543V807H542V808H541V806H540V807H539V806H538V806H537V806H536V807H535V816H534V811H533V804H532V805H531V805H530V804H529V804H528V805H527V806H526V807H525V807H524V807H523V808H522V805H521V807H520V808H519V808H518V808H517V808H516V808H515V807H514V807H513V805H512V807H511V806H510V805H509V806H508V807H507V809H506V807H505V807H504V808H503V809H502V807H501V808H500V806H499V807H498V807H497V808H496V806H495V807H494V806H493V808H492V809H491V809H490V808H489V811H488V808H487V805H486V806H485V807H484V807H483V806H482V806H481V806H480V808H479V805H478V806H477V806H476V806H475V806H474V806H473V806H472V805H471V808H470V810H469V806H468V807H467V805H466V807H465V807H464V805H463V807H462V807H461V807H460V807H459V806H458V806H457V805H456V807H455V808H454V807H453V806H452V805H451V804H450V804H449V804H448V804H447V804H446V805H445V806H444V807H443V806H442V807H441V805H440V807H439V807H438V805H437V806H436V806H435V807H434V806H433V808H432V809H431V806H430V808H429V809H428V808H427V809H426V808H425V809H424V806H423V808H422V806H421V806H420V807H419V806H418V807H417V806H416V806H415V807H414V806H413V805H412V807H411V808H410V808H409V807H408V805H407V807H406V808H405V809H404V808H403V809H402V809H401V806H400V807H399V806H398V807H397V808H396V807H395V807H394V806H393V806H392V807H391V808H390V806H389V808H388V807H387V806H386V807H385V807H384V807H383V806H382V807H381V806H380V806H379V806H378V806H377V804H376V807H375V806H374V805H373V806H372V807H371V807H370V807H369V810H368V808H367V808H366V808H365V808H364V806H363V808H362V805H361V806H360V806H359V806H358V806H357V806H356V806H355V806H354V806H353V806H352V807H351V806H350V806H349V807H348V807H347V806H346V806H345V805H344V801H343V801H342V801H341V801H340V801H339V801H338V801H337V801H336V803H335V808H334V806H333V809H332V809H331V807H330V808H329V808H328V809H327V807H326V806H325V805H324V807H323V807H322V805H321V805H320V807H319V806H318V805H317V805H316V807H315V808H314V808H313V807H312V808H311V808H310V806H309V808H308V806H307V807H306V804H305V806H304V804H303V807H302V806H301V809H300V806H299V806H298V807H297V811H296V807H295V808H294V809H293V807H292V807H291V808H290V808H289V806H288V806H287V805H286V805H285V805H284V804H283V803H282V802H281V802H280V802H279V802H278V802H277V802H276V802H275V802H274V802H273V802H272V802H271V803H270V802H269V802H268V803H267V803H266V803H265V804H264V802H263V803H262V803H261V803H260V803H259V803H258V802H257V802H256V802H255V802H254V803H253V802H252V803H251V802H250V802H249V801H248V802H247V802H246V802H245V802H244V802H243V802H242V803H241V802H240V802H239V801H238V802H237V802H236V802H235V802H234V802H233V803H232V803H231V802H230V803H229V805H228V804H227V805H226V806H225V806H224V806H223V806H222V808H221V807H220V809H219V807H218V809H217V809H216V811H215V815H214V813H213V800H212V797H211V797H210V797H209V797H208V797H207V797H206V797H205V797H204V797H203V797H202V797H201V797H200V797H199V797H198V797H197V797H196V797H195V797H194Z" fill="#4252d2"/><path d="M194 796V796H195V796H196V796H197V796H198V796H199V796H200V796H201V796H202V796H203V796H204V796H205V796H206V796H207V796H208V796H209V796H210V796H211V796H212V795H213V790H214V789H215V790H216V790H217V791H218V791H219V791H220V792H221V791H222V792H223V791H224V792H225V792H226V792H227V792H228V793H229V792H230V792H231V793H232V793H233V793H234V794H235V794H236V794H237V794H238V794H239V794H240V794H241V794H242V794H243V794H244V794H245V794H246V794H247V794H248V794H249V794H250V794H251V793H252V793H253V793H254V792H255V792H256V793H257V793H258V792H259V793H260V792H261V792H262V793H263V792H264V793H265V792H266V793H267V793H268V792H269V792H270V793H271V793H272V793H273V792H274V793H275V793H276V793H277V793H278V793H279V793H280V793H281V793H282V792H283V792H284V791H285V791H286V791H287V791H288V791H289V791H290V791H291V791H292V791H293V790H294V791H295V791H296V791H297V791H298V791H299V791H300V791H301V791H302V791H303V791H304V791H305V791H306V791H307V791H308V790H309V790H310V790H311V790H312V790H313V790H314V790H315V790H316V791H317V790H318V791H319V790H320V790H321V790H322V791H323V790H324V791H325V791H326V791H327V791H328V791H329V791H330V791H331V791H332V791H333V790H334V791H335V793H336V794H337V794H338V794H339V794H340V794H341V794H342V794H343V793H344V791H345V791H346V790H347V790H348V790H349V791H350V791H351V791H352V790H353V790H354V791H355V791H356V791H357V790H358V791H359V791H360V791H361V791H362V791H363V791H364V791H365V791H366V791H367V790H368V791H369V791H370V791H371V791H372V791H373V791H374V791H375V791H376V791H377V791H378V791H379V791H380V791H381V791H382V791H383V791H384V791H385V791H386V791H387V791H388V791H389V791H390V790H391V791H392V790H393V790H394V791H395V791H396V791H397V791H398V791H399V791H400V791H401V791H402V791H403V791H404V791H405V791H406V791H407V791H408V791H409V791H410V791H411V791H412V791H413V791H414V791H415V791H416V791H417V791H418V791H419V791H420V791H421V791H422V791H423V791H424V791H425V791H426V791H427V791H428V791H429V791H430V791H431V791H432V791H433V791H434V791H435V790H436V790H437V791H438V791H439V791H440V791H441V791H442V791H443V791H444V791H445V791H446V791H447V790H448V791H449V791H450V791H451V790H452V790H453V791H454V790H455V790H456V790H457V790H458V790H459V791H460V791H461V791H462V790H463V790H464V790H465V791H466V791H467V791H468V791H469V791H470V791H471V791H472V791H473V791H474V791H475V790H476V790H477V791H478V791H479V791H480V790H481V790H482V790H483V791H484V790H485V791H486V791H487V790H488V791H489V791H490V791H491V791H492V791H493V790H494V791H495V791H496V791H497V791H498V791H499V791H500V791H501V791H502V791H503V790H504V791H505V791H506V791H507V791H508V791H509V791H510V790H511V791H512V791H513V791H514V791H515V790H516V790H517V790H518V790H519V790H520V790H521V790H522V790H523V791H524V791H525V791H526V791H527V792H528V791H529V792H530V792H531V792H532V792H533V789H534V788H535V790H536V790H537V791H538V790H539V790H540V791H541V790H542V790H543V790H544V791H545V790H546V791H547V790H548V791H549V791H550V791H551V791H552V791H553V791H554V791H555V791H556V791H557V791H558V791H559V791H560V791H561V791H562V791H563V791H564V791H565V791H566V791H567V791H568V791H569V791H570V791H571V791H572V791H573V791H574V791H575V791H576V791H577V791H578V792H579V792H580V791H581V791H582V792H583V791H584V792H585V791H586V791H587V791H588V791H589V791H590V791H591V791H592V791H593V791H594V791H595V791H596V791H597V791H598V792H599V794H600V794H601V794H602V794H603V794H604V794H605V794H606V794H607V794H608V794H609V794H610V794H611V794H612V794H613V794H614V794H615V793H616V792H617V791H618V791H619V791H620V791H621V791H622V791H623V791H624V791H625V791H626V790H627V790H628V791H629V790H630V791H631V790H632V791H633V791H634V791H635V790H636V791H637V791H638V791H639V791H640V791H641V791H642V792H643V791H644V792H645V791H646V792H647V792H648V791H649V791H650V792H651V792H652V791H653V792H654V791H655V792H656V791H657V791H658V791H659V791H660V791H661V791H662V791H663V791H664V791H665V791H666V791H667V791H668V791H669V791H670V791H671V791H672V791H673V791H674V791H675V791H676V791H677V791H678V791H679V790H680V790H681V790H682V790H683V790H684V791H685V791H686V791H687V791H688V791H689V791H690V791H691V792H692V791H693V791H694V791H695V792H696V792H697V791H698V792H699V791H700V791H701V791H702V791H703V791H704V791H705V791H706V791H707V791H708V791H709V791H710V791H711V791H712V791H713V791H714V791H715V791H716V791H717V791H718V790H719V789H720V790H721V790H722V786H723V783H724V782H725V783H726V781H727V782H728V783H729V783H730V782H731V783H732V784H733V784H734V783H735V784H736V784H737V784H738V784H739V784H740V784H741V785H742V784H743V786H744V785H745V785H746V787H747V786H748V786H749V787H750V787H751V788H752V788H753V788H754V790H755V790H756V792H757V793H758V793H759V793H760V793H761V793H762V793H763V793H764V793H765V793H766V793H767V793H768V793H769V793H770V793H771V793H772V794H773V793H774V793H775V793H776V793H777V794H778V793H779V793H780V794H781V793H782V794H783V793H784V794H785V793H786V794H787V794H788V793H789V793H790V793H791V793H792V793H793V794H794V794H795V794H796V793H797V793H798V793H799V794H800V793H801V793H802V793H803V793H804V793H805V793H806V793H807V793H808V793H809V793H810V793H811V793H812V793H813V793H814V794H815V793H816V794H817V793H818V792H819V791H820V792H821V791H822V791H823V792H824V792H825V792H826V792H827V792H828V792H829V791H830V791H831V792H832V792H833V792H834V792H835V792H836V792H837V792H838V792H839V792H840V792H841V792H842V792H843V792H844V792H845V792H846V792H847V792H848V792H849V792H850V792H851V792H852V792H853V792H854V792H855V792H856V792H857V792H858V793H859V792H860V793H861V793H862V793H863V793H864V793H865V794H866V794H867V792H868V792H869V792H870V791H871V791H872V792H873V792H874V792H875V792H876V792H877V792H878V792H879V792H880V792H881V792H882V792H883V792H884V792H885V791H886V792H887V791H888V791H889V791H890V791H891V790H892V791H893V791H894V791H895V791H896V791H897V791H898V791H899V791H900V791H901V791H902V791H903V791H904V791H905V791H906V791H907V791H908V791H909V790H910V791H911V791H912V790H913V790H914V790H915V790H916V790H917V790H918V790H919V790H920V790H921V790H922V790H923V791H924V790H925V790H926V790H927V790H928V790H929V790H930V791H931V791H932V791H933V791H934V791H935V790H936V791H937V791H938V790H939V790H940V790H941V790H942V790H943V790H944V790H945V791H946V791H947V791H948V791H949V791H950V791H951V791H952V791H953V791H954V791H955V791H956V791H957V791H958V790H959V791H960V791H961V791H962V791H963V791H964V791H965V791H966V791H967V790H968V791H969V790H970V790H971V790H972V790H973V790H974V791H975V790H976V791H977V790H978V790H979V790H980V791H981V791H982V791H983V791H984V791H985V791H986V791H987V791H988V791H989V791H990V790H991V790H992V790H993V790H994V790H995V790H996V790H997V790H998V790H999V791H1000V791H1001V791H1002V791H1003V791H1004V791H1005V791H1006V791H1007V791H1008V791H1009V791H1010V791H1011V791H1012V791H1013V791H1014V790H1015V791H1016V792H1017V793H1018V793H1019V793H1020V793H1021V793H1022V793H1023V793H1024V793H1025V793H1026V793H1027V793H1028V793H1029V793H1030V794H1031V794H1032V794H1033V794H1034V794H1035V794H1036V794H1037V794H1038V794H1039V794H1040V794H1041V794H1042V794H1043V794H1044V794H1045V794H1046V794H1047V794H1048V794H1049V794H1050V794H1051V794H1052V794H1053V794H1054V794H1055V794H1056V794H1057V794H1058V794H1059V794H1060V794H1061V794H1062V794H1063V794H1064V794H1065V794H1066V794H1067V794H1068V794H1069V795H1070V795H1071V795H1072V795H1073V795H1074V795H1075V795H1076V795H1077V795H1078V795H1079V795H1080V795H1081V795H1082V795H1083V795H1084V795H1085V795H1086V795H1087V792H1088V790H1089V791H1090V792H1091V792H1092V792H1093V792H1094V792H1095V792H1096V792H1097V793H1098V793H1099V793H1100V793H1101V793H1102V793H1103V793H1104V793H1105V793H1106V793H1107V793H1108V793H1109V793H1110V793H1111V793H1112V793H1113V793H1114V794H1115V794H1116V794H1117V794H1118V794H1119V793H1120V791H1121V790H1122V790H1123V790H1124V791H1125V790H1126V791H1127V790H1128V791H1129V790H1130V791H1131V790H1132V791H1133V791H1134V790H1135V790H1136V790H1137V790H1138V791H1139V790H1140V791H1141V791H1142V790H1143V791H1144V790H1145V791H1146V791H1147V791H1148V791H1149V791H1150V791H1151V791H1152V791H1153V791H1154V791H1155V791H1156V791H1157V791H1158V791H1159V791H1160V791H1161V791H1162V791H1163V802H1162V802H1161V802H1160V802H1159V802H1158V802H1157V802H1156V802H1155V802H1154V802H1153V802H1152V802H1151V801H1150V801H1149V802H1148V801H1147V802H1146V802H1145V802H1144V802H1143V802H1142V802H1141V802H1140V802H1139V802H1138V802H1137V802H1136V802H1135V802H1134V802H1133V802H1132V802H1131V801H1130V802H1129V802H1128V802H1127V802H1126V802H1125V803H1124V803H1123V802H1122V802H1121V802H1120V800H1119V799H1118V799H1117V799H1116V799H1115V799H1114V800H1113V799H1112V800H1111V800H1110V800H1109V800H1108V800H1107V800H1106V801H1105V801H1104V801H1103V801H1102V801H1101V801H1100V801H1099V801H1098V802H1097V802H1096V802H1095V802H1094V802H1093V802H1092V802H1091V802H1090V803H1089V804H1088V802H1087V798H1086V798H1085V798H1084V798H1083V798H1082V798H1081V798H1080V798H1079V798H1078V798H1077V798H1076V798H1075V798H1074V798H1073V798H1072V798H1071V798H1070V798H1069V798H1068V798H1067V798H1066V798H1065V798H1064V798H1063V799H1062V798H1061V799H1060V799H1059V798H1058V799H1057V798H1056V798H1055V799H1054V799H1053V799H1052V799H1051V799H1050V799H1049V799H1048V799H1047V799H1046V799H1045V799H1044V799H1043V799H1042V799H1041V799H1040V799H1039V799H1038V799H1037V799H1036V799H1035V799H1034V800H1033V800H1032V800H1031V800H1030V799H1029V800H1028V800H1027V800H1026V800H1025V800H1024V800H1023V800H1022V801H1021V800H1020V801H1019V801H1018V801H1017V801H1016V801H1015V802H1014V802H1013V802H1012V802H1011V802H1010V802H1009V802H1008V802H1007V802H1006V802H1005V802H1004V802H1003V802H1002V802H1001V802H1000V802H999V802H998V801H997V801H996V801H995V802H994V802H993V802H992V802H991V801H990V802H989V802H988V802H987V802H986V802H985V802H984V802H983V802H982V802H981V802H980V802H979V802H978V802H977V802H976V802H975V802H974V802H973V802H972V802H971V802H970V801H969V801H968V801H967V802H966V802H965V802H964V802H963V802H962V802H961V802H960V802H959V802H958V802H957V802H956V802H955V801H954V802H953V802H952V801H951V802H950V801H949V802H948V802H947V802H946V802H945V802H944V802H943V802H942V802H941V802H940V802H939V802H938V802H937V802H936V802H935V802H934V802H933V802H932V802H931V802H930V802H929V802H928V802H927V802H926V802H925V802H924V802H923V802H922V802H921V802H920V802H919V802H918V802H917V802H916V802H915V802H914V802H913V802H912V802H911V802H910V802H909V802H908V802H907V802H906V802H905V802H904V801H903V802H902V802H901V802H900V802H899V802H898V802H897V802H896V802H895V802H894V803H893V803H892V802H891V802H890V803H889V802H888V802H887V801H886V801H885V801H884V801H883V801H882V800H881V800H880V801H879V801H878V801H877V801H876V801H875V801H874V801H873V801H872V801H871V800H870V800H869V800H868V800H867V799H866V799H865V800H864V801H863V800H862V801H861V801H860V801H859V801H858V800H857V801H856V801H855V801H854V801H853V801H852V801H851V801H850V801H849V801H848V801H847V801H846V801H845V801H844V801H843V801H842V801H841V801H840V801H839V801H838V801H837V801H836V801H835V801H834V801H833V801H832V801H831V801H830V801H829V801H828V801H827V801H826V801H825V801H824V801H823V801H822V801H821V801H820V801H819V800H818V800H817V799H816V799H815V799H814V799H813V799H812V799H811V800H810V800H809V800H808V799H807V800H806V800H805V800H804V799H803V799H802V799H801V800H800V799H799V800H798V800H797V800H796V800H795V799H794V800H793V799H792V799H791V799H790V799H789V799H788V799H787V799H786V799H785V800H784V799H783V799H782V799H781V800H780V800H779V800H778V800H777V799H776V799H775V799H774V800H773V800H772V800H771V799H770V800H769V800H768V799H767V799H766V800H765V800H764V799H763V800H762V799H761V800H760V800H759V800H758V800H757V801H756V802H755V802H754V803H753V804H752V804H751V804H750V804H749V806H748V806H747V806H746V807H745V807H744V809H743V808H742V809H741V810H740V809H739V810H738V810H737V811H736V811H735V812H734V811H733V811H732V811H731V812H730V811H729V811H728V811H727V814H726V816H725V813H724V810H723V807H722V804H721V804H720V803H719V802H718V802H717V802H716V802H715V802H714V802H713V802H712V802H711V802H710V802H709V802H708V802H707V802H706V802H705V802H704V802H703V802H702V802H701V802H700V802H699V802H698V802H697V802H696V801H695V802H694V802H693V802H692V802H691V801H690V802H689V802H688V802H687V801H686V801H685V801H684V801H683V801H682V801H681V801H680V801H679V801H678V801H677V802H676V802H675V802H674V802H673V802H672V802H671V802H670V802H669V802H668V802H667V802H666V802H665V802H664V801H663V801H662V802H661V802H660V802H659V802H658V802H657V802H656V802H655V802H654V802H653V802H652V802H651V801H650V802H649V801H648V801H647V802H646V801H645V801H644V802H643V801H642V801H641V802H640V801H639V802H638V801H637V802H636V802H635V802H634V802H633V801H632V802H631V801H630V801H629V801H628V801H627V801H626V801H625V801H624V801H623V801H622V801H621V802H620V802H619V802H618V802H617V801H616V800H615V799H614V799H613V799H612V799H611V799H610V799H609V799H608V799H607V799H606V799H605V799H604V799H603V799H602V799H601V799H600V800H599V801H598V802H597V802H596V801H595V802H594V801H593V801H592V801H591V801H590V801H589V801H588V801H587V801H586V801H585V801H584V801H583V801H582V801H581V801H580V801H579V801H578V801H577V801H576V801H575V801H574V801H573V801H572V801H571V801H570V801H569V801H568V802H567V802H566V801H565V801H564V801H563V802H562V801H561V802H560V801H559V802H558V802H557V801H556V802H555V802H554V802H553V801H552V801H551V802H550V802H549V801H548V801H547V802H546V801H545V802H544V801H543V802H542V802H541V802H540V802H539V802H538V802H537V802H536V802H535V804H534V803H533V800H532V800H531V801H530V801H529V801H528V801H527V801H526V802H525V801H524V802H523V802H522V802H521V802H520V802H519V802H518V802H517V802H516V803H515V802H514V802H513V802H512V802H511V802H510V802H509V802H508V802H507V802H506V802H505V802H504V802H503V802H502V802H501V802H500V803H499V803H498V803H497V802H496V802H495V802H494V802H493V802H492V802H491V802H490V802H489V802H488V802H487V802H486V802H485V802H484V802H483V802H482V802H481V802H480V802H479V802H478V802H477V802H476V802H475V802H474V802H473V802H472V802H471V802H470V802H469V802H468V802H467V802H466V802H465V802H464V802H463V802H462V802H461V802H460V802H459V802H458V802H457V802H456V802H455V802H454V802H453V802H452V801H451V802H450V802H449V802H448V802H447V802H446V801H445V802H444V802H443V801H442V802H441V802H440V802H439V802H438V802H437V802H436V802H435V802H434V802H433V802H432V802H431V802H430V802H429V803H428V803H427V802H426V803H425V802H424V802H423V802H422V802H421V802H420V802H419V802H418V802H417V802H416V802H415V802H414V802H413V802H412V802H411V802H410V802H409V802H408V803H407V802H406V802H405V802H404V802H403V802H402V802H401V802H400V802H399V802H398V802H397V802H396V802H395V802H394V802H393V802H392V802H391V802H390V802H389V802H388V802H387V802H386V802H385V802H384V802H383V802H382V802H381V802H380V802H379V802H378V801H377V802H376V802H375V801H374V802H373V802H372V802H371V802H370V802H369V802H368V802H367V802H366V802H365V802H364V802H363V802H362V802H361V802H360V802H359V802H358V801H357V801H356V801H355V802H354V802H353V802H352V802H351V802H350V802H349V802H348V802H347V802H346V802H345V801H344V799H343V799H342V799H341V799H340V799H339V799H338V799H337V799H336V800H335V801H334V802H333V803H332V803H331V802H330V803H329V802H328V802H327V802H326V802H325V802H324V802H323V801H322V802H321V802H320V801H319V802H318V802H317V802H316V802H315V802H314V802H313V802H312V802H311V802H310V802H309V802H308V802H307V802H306V802H305V802H304V802H303V801H302V802H301V801H300V802H299V802H298V802H297V802H296V803H295V803H294V802H293V802H292V802H291V802H290V802H289V802H288V802H287V801H286V801H285V802H284V801H283V800H282V800H281V799H280V799H279V800H278V800H277V800H276V799H275V800H274V800H273V799H272V799H271V800H270V800H269V800H268V800H267V800H266V800H265V800H264V800H263V800H262V800H261V800H260V800H259V800H258V800H257V800H256V800H255V800H254V800H253V800H252V799H251V799H250V800H249V799H248V799H247V800H246V799H245V800H244V799H243V799H242V800H241V799H240V800H239V800H238V800H237V799H236V800H235V799H234V800H233V800H232V800H231V800H230V800H229V801H228V801H227V801H226V802H225V802H224V801H223V802H222V803H221V802H220V802H219V803H218V803H217V804H216V805H215V805H214V804H213V799H212V797H211V797H210V797H209V797H208V797H207V797H206V797H205V797H204V797H203V797H202V797H201V797H200V797H199V797H198V797H197V797H196V797H195V797H194Z" fill="#7482e2"/></svg></div>
<div style="left:57px;top:1094px;width:1844px;height:1px;background:#a6a6bc"></div>
<div style="left:57px;top:1095px;width:1844px;height:55px;background:#ececec"></div>
<div style="left:57px;top:1095px;width:11px;height:55px;background:#e5e5e5"></div>
<div style="left:61px;top:1100px;width:4px;height:1px;background:#9c9cb6"></div>
<div style="left:61px;top:1104px;width:4px;height:1px;background:#9c9cb6"></div>
<div style="left:61px;top:1108px;width:4px;height:1px;background:#9c9cb6"></div>
<div style="left:61px;top:1112px;width:4px;height:1px;background:#9c9cb6"></div>
<div style="left:61px;top:1116px;width:4px;height:1px;background:#9c9cb6"></div>
<div style="left:61px;top:1120px;width:4px;height:1px;background:#9c9cb6"></div>
<div style="left:61px;top:1124px;width:4px;height:1px;background:#9c9cb6"></div>
<div style="left:61px;top:1128px;width:4px;height:1px;background:#9c9cb6"></div>
<div style="left:61px;top:1132px;width:4px;height:1px;background:#9c9cb6"></div>
<div style="left:61px;top:1136px;width:4px;height:1px;background:#9c9cb6"></div>
<div style="left:61px;top:1140px;width:4px;height:1px;background:#9c9cb6"></div>
<div style="left:61px;top:1144px;width:4px;height:1px;background:#9c9cb6"></div>
<div class="t" style="left:69.60px;top:1101.97px;font-size:13.5px;letter-spacing:0.002px;">Project Rate (Hz):</div>
<div style="left:72px;top:1121px;width:52px;height:22px;background:#fff;border:1px solid #a4a4a4;box-shadow:inset 0 1px 1px rgba(0,0,0,.15)"></div>
<div class="t" style="left:74.70px;top:1124.67px;font-size:13.5px;letter-spacing:0.440px;">44100</div>
<div style="left:127px;top:1121px;width:21px;height:21px;border:1px solid #2a4a9a;border-radius:5px;background:linear-gradient(#cfe4fa,#8ab8ee 48%,#6aa2e8 52%,#b8e0ff)"><svg width="21" height="21" style="left:-1px;top:-1px"><path d="M10.5 4.5 L13.5 8.5 H7.5 Z M10.5 16.5 L13.5 12.5 H7.5 Z" fill="#111"/></svg></div>
<div style="left:184px;top:1118px;width:1px;height:27px;background:#8a8a8a"></div>
<div style="left:193px;top:1125px;width:14px;height:14px;border:1px solid #8e8e8e;border-radius:3px;background:linear-gradient(#fdfdfd,#ececec)"></div>
<div class="t" style="left:211.40px;top:1124.97px;font-size:13.5px;letter-spacing:-0.165px;">Snap To</div>
<div class="t" style="left:267.30px;top:1101.77px;font-size:13.5px;letter-spacing:0.077px;">Selection Start:</div>
<div style="left:427px;top:1101px;width:15px;height:15px;border:1px solid #4a6aa8;border-radius:50%;background:radial-gradient(circle at 50% 60%,#e8f4ff,#9cc4ee 60%,#6a9ad8)"><div style="left:4px;top:4px;width:5px;height:5px;border-radius:50%;background:#111"></div></div>
<div class="t" style="left:446.60px;top:1101.77px;font-size:13.5px;letter-spacing:-1.310px;">End</div>
<div style="left:476px;top:1101px;width:15px;height:15px;border:1px solid #8e8e8e;border-radius:50%;background:linear-gradient(#fdfdfd,#ececec)"></div>
<div class="t" style="left:495.30px;top:1101.77px;font-size:13.5px;letter-spacing:0.162px;">Length</div>
<div class="t" style="left:592.60px;top:1101.77px;font-size:13.5px;letter-spacing:0.239px;">Audio Position:</div>
<div style="left:267px;top:1121px;width:153px;height:22px;background:#c9c9c9;border:1px solid #a0a0a0;border-top-color:#8a8a8a"></div>
<div class="t" style="left:270.70px;top:1123.17px;font-size:15.8px;font-family:'Liberation Serif',serif;letter-spacing:2.200px;color:#1212c4;">00</div>
<div class="t" style="left:294.00px;top:1124.26px;font-size:14.5px;font-family:'Liberation Serif',serif;color:#111;">h</div>
<div class="t" style="left:305.80px;top:1123.17px;font-size:15.8px;font-family:'Liberation Serif',serif;letter-spacing:2.200px;color:#1212c4;">00</div>
<div class="t" style="left:329.10px;top:1124.26px;font-size:14.5px;font-family:'Liberation Serif',serif;color:#111;">m</div>
<div class="t" style="left:346.30px;top:1123.17px;font-size:15.8px;font-family:'Liberation Serif',serif;letter-spacing:1.467px;color:#1212c4;">11.410</div>
<div class="t" style="left:401.80px;top:1124.26px;font-size:14.5px;font-family:'Liberation Serif',serif;color:#444;">s</div>
<div style="left:409px;top:1123px;width:9px;height:18px;background:#d4d4d4;border:1px solid #f4f4f4;border-right-color:#a8a8c0;border-bottom-color:#a8a8c0"><svg width="9" height="6" style="left:-1px;top:4px"><path d="M0.5 0.5 H7.5 L4 4.5 Z" fill="#000"/></svg></div>
<div style="left:427px;top:1121px;width:153px;height:22px;background:#c9c9c9;border:1px solid #a0a0a0;border-top-color:#8a8a8a"></div>
<div class="t" style="left:430.70px;top:1123.17px;font-size:15.8px;font-family:'Liberation Serif',serif;letter-spacing:2.200px;color:#1212c4;">00</div>
<div class="t" style="left:454.00px;top:1124.26px;font-size:14.5px;font-family:'Liberation Serif',serif;color:#111;">h</div>
<div class="t" style="left:465.80px;top:1123.17px;font-size:15.8px;font-family:'Liberation Serif',serif;letter-spacing:2.200px;color:#1212c4;">00</div>
<div class="t" style="left:489.10px;top:1124.26px;font-size:14.5px;font-family:'Liberation Serif',serif;color:#111;">m</div>
<div class="t" style="left:506.30px;top:1123.17px;font-size:15.8px;font-family:'Liberation Serif',serif;letter-spacing:1.467px;color:#1212c4;">11.410</div>
<div class="t" style="left:561.80px;top:1124.26px;font-size:14.5px;font-family:'Liberation Serif',serif;color:#444;">s</div>
<div style="left:569px;top:1123px;width:9px;height:18px;background:#d4d4d4;border:1px solid #f4f4f4;border-right-color:#a8a8c0;border-bottom-color:#a8a8c0"><svg width="9" height="6" style="left:-1px;top:4px"><path d="M0.5 0.5 H7.5 L4 4.5 Z" fill="#000"/></svg></div>
<div style="left:585px;top:1118px;width:1px;height:27px;background:#8a8a8a"></div>
<div style="left:592px;top:1121px;width:153px;height:22px;background:#c9c9c9;border:1px solid #a0a0a0;border-top-color:#8a8a8a"></div>
<div class="t" style="left:595.70px;top:1123.17px;font-size:15.8px;font-family:'Liberation Serif',serif;letter-spacing:2.200px;color:#1212c4;">00</div>
<div class="t" style="left:619.00px;top:1124.26px;font-size:14.5px;font-family:'Liberation Serif',serif;color:#111;">h</div>
<div class="t" style="left:630.80px;top:1123.17px;font-size:15.8px;font-family:'Liberation Serif',serif;letter-spacing:2.200px;color:#1212c4;">00</div>
<div class="t" style="left:654.10px;top:1124.26px;font-size:14.5px;font-family:'Liberation Serif',serif;color:#111;">m</div>
<div class="t" style="left:671.30px;top:1123.17px;font-size:15.8px;font-family:'Liberation Serif',serif;letter-spacing:1.350px;color:#1212c4;">00.000</div>
<div class="t" style="left:726.80px;top:1124.26px;font-size:14.5px;font-family:'Liberation Serif',serif;color:#444;">s</div>
<div style="left:734px;top:1123px;width:9px;height:18px;background:#d4d4d4;border:1px solid #f4f4f4;border-right-color:#a8a8c0;border-bottom-color:#a8a8c0"><svg width="9" height="6" style="left:-1px;top:4px"><path d="M0.5 0.5 H7.5 L4 4.5 Z" fill="#000"/></svg></div>
<div style="left:57px;top:1150px;width:1844px;height:1px;background:#a6a6bc"></div>
<div style="left:57px;top:1151px;width:1844px;height:18px;background:#ececec"></div>
<div style="left:57px;top:1151px;width:1690px;height:1px;background:#fafafa"></div>
<div style="left:1747px;top:1151px;width:154px;height:1px;background:#bcd4f4"></div>
<div class="t" style="left:1754.00px;top:1153.19px;font-size:11px;letter-spacing:0.467px;">Actual Rate: 44100</div>
<svg width="14" height="14" style="left:1886px;top:1154px"><path d="M2 13 L13 2 M6 13 L13 6 M10 13 L13 10" stroke="#a0a0a0" stroke-width="1"/><path d="M3 13 L13 3 M7 13 L13 7 M11 13 L13 11" stroke="#fff" stroke-width="0.8"/></svg>
</body></html>
